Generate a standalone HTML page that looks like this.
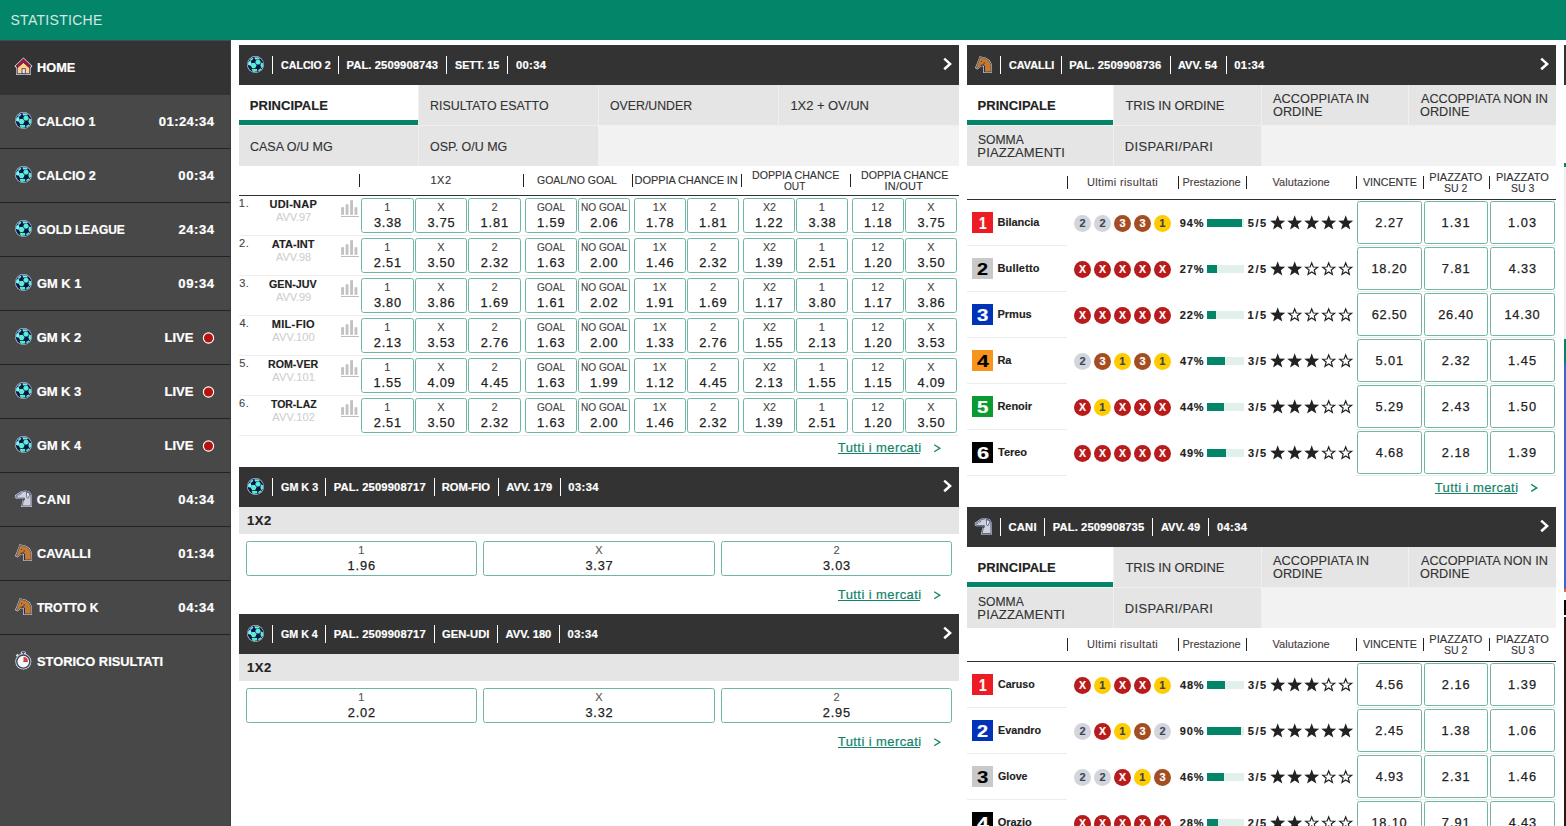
<!DOCTYPE html>
<html lang="it"><head><meta charset="utf-8"><title>Statistiche</title>
<style>html,body{margin:0;padding:0}body{width:1566px;height:826px;position:relative;overflow:hidden;background:#fff;font-family:"Liberation Sans",sans-serif}body>div,body>span,body>svg{position:absolute;display:block}body>span{white-space:nowrap;line-height:1;transform-origin:0 50%}</style></head>
<body>
<div style="left:0px;top:0px;width:1566px;height:40px;background:#028568;"></div>
<span style="left:10.47px;top:13px;font-size:14px;color:#fff;letter-spacing:0.29px;opacity:.82;">STATISTICHE</span>
<div style="left:0px;top:40px;width:231px;height:786px;background:#484848;"></div>
<div style="left:0px;top:41px;width:231px;height:54px;background:#333333;"></div>
<div style="left:0px;top:148px;width:231px;height:1px;background:#222222;"></div>
<div style="left:0px;top:202px;width:231px;height:1px;background:#222222;"></div>
<div style="left:0px;top:256px;width:231px;height:1px;background:#222222;"></div>
<div style="left:0px;top:310px;width:231px;height:1px;background:#222222;"></div>
<div style="left:0px;top:364px;width:231px;height:1px;background:#222222;"></div>
<div style="left:0px;top:418px;width:231px;height:1px;background:#222222;"></div>
<div style="left:0px;top:472px;width:231px;height:1px;background:#222222;"></div>
<div style="left:0px;top:526px;width:231px;height:1px;background:#222222;"></div>
<div style="left:0px;top:580px;width:231px;height:1px;background:#222222;"></div>
<div style="left:0px;top:634px;width:231px;height:1px;background:#222222;"></div>
<div style="left:230px;top:40px;width:1px;height:786px;background:#3e3e3e;"></div>
<svg style="left:13px;top:56px" width="22" height="22" viewBox="13 56 22 22"><g transform="translate(0 0)"><polygon points="23.45,57.5 32.4,66 31.7,67.3 30.8,67.4 30.7,74.9 16.2,74.9 16.1,67.4 15.2,67.3 14.5,66" fill="#dcdfee"/><polygon points="23.45,62.3 29.7,67.5 29.7,73.8 17.2,73.8 17.2,67.5" fill="#ffd37f" stroke="#17174f" stroke-width="0.8"/><path d="M16.7 67 L23.45 60.5 L30.2 67" fill="none" stroke="#17174f" stroke-width="2.9"/><path d="M16.9 66.8 L23.45 60.5 L30 66.8" fill="none" stroke="#c9112f" stroke-width="1.75"/><rect x="22" y="68.7" width="3.3" height="5" fill="#ebe5df" stroke="#2b2b63" stroke-width="0.75"/></g></svg>
<span style="left:36.77px;top:61px;font-size:13.1px;color:#fff;font-weight:700;transform:scaleX(0.974);-webkit-text-stroke:0.2px #fff;">HOME</span>
<svg style="left:13px;top:110px" width="21" height="21" viewBox="-10.5 -10.5 21 21"><circle r="8.5" fill="#b9bcd0"/><circle r="7.8" fill="#0b134e"/><polygon points="1.05,1.1 -0.42,3.65 -3.37,3.65 -4.85,1.1 -3.38,-1.45 -0.42,-1.45" fill="#5cefce"/><polygon points="5.3,-2.4 3.9,0.02 1.1,0.02 -0.3,-2.4 1.1,-4.82 3.9,-4.82" fill="#5cefce"/><polygon points="-1.2,-7.2 3.4,-7 4.3,-5.3 -0.4,-5.1" fill="#6df5e4"/><polygon points="-5.7,-4.6 -3,-6.9 -2.1,-5.7 -4.6,-3.6" fill="#6df5e4"/><polygon points="-7.3,-2.6 -5.1,-3.9 -3.9,-0.9 -5,1.2 -7.4,0.6" fill="#7cf9f1"/><polygon points="5.3,-2 7.4,-1.4 7.5,2.6 5.6,3.6 5,1" fill="#5cefce"/><polygon points="-3.9,4.5 1.5,4.5 1.9,7 -2.7,7.5" fill="#50ecc4"/><polygon points="2.5,5.6 5.2,3.8 6,4.9 3.2,7" fill="#50ecc4"/></svg>
<span style="left:36.8px;top:115px;font-size:13.1px;color:#fff;font-weight:700;transform:scaleX(0.959);-webkit-text-stroke:0.2px #fff;">CALCIO 1</span>
<span style="left:158.84px;top:115px;font-size:13.1px;color:#fff;font-weight:700;letter-spacing:0.39px;-webkit-text-stroke:0.2px #fff;">01:24:34</span>
<svg style="left:13px;top:164px" width="21" height="21" viewBox="-10.5 -10.5 21 21"><circle r="8.5" fill="#b9bcd0"/><circle r="7.8" fill="#0b134e"/><polygon points="1.05,1.1 -0.42,3.65 -3.37,3.65 -4.85,1.1 -3.38,-1.45 -0.42,-1.45" fill="#5cefce"/><polygon points="5.3,-2.4 3.9,0.02 1.1,0.02 -0.3,-2.4 1.1,-4.82 3.9,-4.82" fill="#5cefce"/><polygon points="-1.2,-7.2 3.4,-7 4.3,-5.3 -0.4,-5.1" fill="#6df5e4"/><polygon points="-5.7,-4.6 -3,-6.9 -2.1,-5.7 -4.6,-3.6" fill="#6df5e4"/><polygon points="-7.3,-2.6 -5.1,-3.9 -3.9,-0.9 -5,1.2 -7.4,0.6" fill="#7cf9f1"/><polygon points="5.3,-2 7.4,-1.4 7.5,2.6 5.6,3.6 5,1" fill="#5cefce"/><polygon points="-3.9,4.5 1.5,4.5 1.9,7 -2.7,7.5" fill="#50ecc4"/><polygon points="2.5,5.6 5.2,3.8 6,4.9 3.2,7" fill="#50ecc4"/></svg>
<span style="left:36.8px;top:169px;font-size:13.1px;color:#fff;font-weight:700;transform:scaleX(0.961);-webkit-text-stroke:0.2px #fff;">CALCIO 2</span>
<span style="left:178.34px;top:169px;font-size:13.1px;color:#fff;font-weight:700;letter-spacing:0.55px;-webkit-text-stroke:0.2px #fff;">00:34</span>
<svg style="left:13px;top:218px" width="21" height="21" viewBox="-10.5 -10.5 21 21"><circle r="8.5" fill="#b9bcd0"/><circle r="7.8" fill="#0b134e"/><polygon points="1.05,1.1 -0.42,3.65 -3.37,3.65 -4.85,1.1 -3.38,-1.45 -0.42,-1.45" fill="#5cefce"/><polygon points="5.3,-2.4 3.9,0.02 1.1,0.02 -0.3,-2.4 1.1,-4.82 3.9,-4.82" fill="#5cefce"/><polygon points="-1.2,-7.2 3.4,-7 4.3,-5.3 -0.4,-5.1" fill="#6df5e4"/><polygon points="-5.7,-4.6 -3,-6.9 -2.1,-5.7 -4.6,-3.6" fill="#6df5e4"/><polygon points="-7.3,-2.6 -5.1,-3.9 -3.9,-0.9 -5,1.2 -7.4,0.6" fill="#7cf9f1"/><polygon points="5.3,-2 7.4,-1.4 7.5,2.6 5.6,3.6 5,1" fill="#5cefce"/><polygon points="-3.9,4.5 1.5,4.5 1.9,7 -2.7,7.5" fill="#50ecc4"/><polygon points="2.5,5.6 5.2,3.8 6,4.9 3.2,7" fill="#50ecc4"/></svg>
<span style="left:36.82px;top:223px;font-size:13.1px;color:#fff;font-weight:700;transform:scaleX(0.915);-webkit-text-stroke:0.2px #fff;">GOLD LEAGUE</span>
<span style="left:178.41px;top:223px;font-size:13.1px;color:#fff;font-weight:700;letter-spacing:0.53px;-webkit-text-stroke:0.2px #fff;">24:34</span>
<svg style="left:13px;top:272px" width="21" height="21" viewBox="-10.5 -10.5 21 21"><circle r="8.5" fill="#b9bcd0"/><circle r="7.8" fill="#0b134e"/><polygon points="1.05,1.1 -0.42,3.65 -3.37,3.65 -4.85,1.1 -3.38,-1.45 -0.42,-1.45" fill="#5cefce"/><polygon points="5.3,-2.4 3.9,0.02 1.1,0.02 -0.3,-2.4 1.1,-4.82 3.9,-4.82" fill="#5cefce"/><polygon points="-1.2,-7.2 3.4,-7 4.3,-5.3 -0.4,-5.1" fill="#6df5e4"/><polygon points="-5.7,-4.6 -3,-6.9 -2.1,-5.7 -4.6,-3.6" fill="#6df5e4"/><polygon points="-7.3,-2.6 -5.1,-3.9 -3.9,-0.9 -5,1.2 -7.4,0.6" fill="#7cf9f1"/><polygon points="5.3,-2 7.4,-1.4 7.5,2.6 5.6,3.6 5,1" fill="#5cefce"/><polygon points="-3.9,4.5 1.5,4.5 1.9,7 -2.7,7.5" fill="#50ecc4"/><polygon points="2.5,5.6 5.2,3.8 6,4.9 3.2,7" fill="#50ecc4"/></svg>
<span style="left:36.79px;top:277px;font-size:13.1px;color:#fff;font-weight:700;transform:scaleX(0.982);-webkit-text-stroke:0.2px #fff;">GM K 1</span>
<span style="left:178.34px;top:277px;font-size:13.1px;color:#fff;font-weight:700;letter-spacing:0.55px;-webkit-text-stroke:0.2px #fff;">09:34</span>
<svg style="left:13px;top:326px" width="21" height="21" viewBox="-10.5 -10.5 21 21"><circle r="8.5" fill="#b9bcd0"/><circle r="7.8" fill="#0b134e"/><polygon points="1.05,1.1 -0.42,3.65 -3.37,3.65 -4.85,1.1 -3.38,-1.45 -0.42,-1.45" fill="#5cefce"/><polygon points="5.3,-2.4 3.9,0.02 1.1,0.02 -0.3,-2.4 1.1,-4.82 3.9,-4.82" fill="#5cefce"/><polygon points="-1.2,-7.2 3.4,-7 4.3,-5.3 -0.4,-5.1" fill="#6df5e4"/><polygon points="-5.7,-4.6 -3,-6.9 -2.1,-5.7 -4.6,-3.6" fill="#6df5e4"/><polygon points="-7.3,-2.6 -5.1,-3.9 -3.9,-0.9 -5,1.2 -7.4,0.6" fill="#7cf9f1"/><polygon points="5.3,-2 7.4,-1.4 7.5,2.6 5.6,3.6 5,1" fill="#5cefce"/><polygon points="-3.9,4.5 1.5,4.5 1.9,7 -2.7,7.5" fill="#50ecc4"/><polygon points="2.5,5.6 5.2,3.8 6,4.9 3.2,7" fill="#50ecc4"/></svg>
<span style="left:36.78px;top:331px;font-size:13.1px;color:#fff;font-weight:700;letter-spacing:-0.13px;-webkit-text-stroke:0.2px #fff;">GM K 2</span>
<span style="left:164.45px;top:331px;font-size:13.1px;color:#fff;font-weight:700;letter-spacing:0.01px;-webkit-text-stroke:0.2px #fff;">LIVE</span>
<svg style="left:202px;top:331px" width="14" height="14" viewBox="202 331 14 14"><circle cx="208.5" cy="338" r="5.7" fill="#fff"/><circle cx="208.5" cy="338" r="4.55" fill="#b5130f"/></svg>
<svg style="left:13px;top:380px" width="21" height="21" viewBox="-10.5 -10.5 21 21"><circle r="8.5" fill="#b9bcd0"/><circle r="7.8" fill="#0b134e"/><polygon points="1.05,1.1 -0.42,3.65 -3.37,3.65 -4.85,1.1 -3.38,-1.45 -0.42,-1.45" fill="#5cefce"/><polygon points="5.3,-2.4 3.9,0.02 1.1,0.02 -0.3,-2.4 1.1,-4.82 3.9,-4.82" fill="#5cefce"/><polygon points="-1.2,-7.2 3.4,-7 4.3,-5.3 -0.4,-5.1" fill="#6df5e4"/><polygon points="-5.7,-4.6 -3,-6.9 -2.1,-5.7 -4.6,-3.6" fill="#6df5e4"/><polygon points="-7.3,-2.6 -5.1,-3.9 -3.9,-0.9 -5,1.2 -7.4,0.6" fill="#7cf9f1"/><polygon points="5.3,-2 7.4,-1.4 7.5,2.6 5.6,3.6 5,1" fill="#5cefce"/><polygon points="-3.9,4.5 1.5,4.5 1.9,7 -2.7,7.5" fill="#50ecc4"/><polygon points="2.5,5.6 5.2,3.8 6,4.9 3.2,7" fill="#50ecc4"/></svg>
<span style="left:36.78px;top:385px;font-size:13.1px;color:#fff;font-weight:700;letter-spacing:-0.13px;-webkit-text-stroke:0.2px #fff;">GM K 3</span>
<span style="left:164.45px;top:385px;font-size:13.1px;color:#fff;font-weight:700;letter-spacing:0.01px;-webkit-text-stroke:0.2px #fff;">LIVE</span>
<svg style="left:202px;top:385px" width="14" height="14" viewBox="202 385 14 14"><circle cx="208.5" cy="392" r="5.7" fill="#fff"/><circle cx="208.5" cy="392" r="4.55" fill="#b5130f"/></svg>
<svg style="left:13px;top:434px" width="21" height="21" viewBox="-10.5 -10.5 21 21"><circle r="8.5" fill="#b9bcd0"/><circle r="7.8" fill="#0b134e"/><polygon points="1.05,1.1 -0.42,3.65 -3.37,3.65 -4.85,1.1 -3.38,-1.45 -0.42,-1.45" fill="#5cefce"/><polygon points="5.3,-2.4 3.9,0.02 1.1,0.02 -0.3,-2.4 1.1,-4.82 3.9,-4.82" fill="#5cefce"/><polygon points="-1.2,-7.2 3.4,-7 4.3,-5.3 -0.4,-5.1" fill="#6df5e4"/><polygon points="-5.7,-4.6 -3,-6.9 -2.1,-5.7 -4.6,-3.6" fill="#6df5e4"/><polygon points="-7.3,-2.6 -5.1,-3.9 -3.9,-0.9 -5,1.2 -7.4,0.6" fill="#7cf9f1"/><polygon points="5.3,-2 7.4,-1.4 7.5,2.6 5.6,3.6 5,1" fill="#5cefce"/><polygon points="-3.9,4.5 1.5,4.5 1.9,7 -2.7,7.5" fill="#50ecc4"/><polygon points="2.5,5.6 5.2,3.8 6,4.9 3.2,7" fill="#50ecc4"/></svg>
<span style="left:36.79px;top:439px;font-size:13.1px;color:#fff;font-weight:700;transform:scaleX(0.975);-webkit-text-stroke:0.2px #fff;">GM K 4</span>
<span style="left:164.45px;top:439px;font-size:13.1px;color:#fff;font-weight:700;letter-spacing:0.01px;-webkit-text-stroke:0.2px #fff;">LIVE</span>
<svg style="left:202px;top:439px" width="14" height="14" viewBox="202 439 14 14"><circle cx="208.5" cy="446" r="5.7" fill="#fff"/><circle cx="208.5" cy="446" r="4.55" fill="#b5130f"/></svg>
<svg style="left:13px;top:488px" width="22" height="22" viewBox="3 4 22 22"><path d="M5 11.3 L10.9 7.3 L15.6 6.4 L19.8 7.7 L21.7 10.9 L22 22.9 L11 22.9 L12.4 17.1 L13.3 14.8 L6.3 14.8 L4.8 13.4 Z" fill="#e3e5ee"/><path d="M5.9 11.7 L11.2 8.1 L15.6 7.2 L19.3 8.4 L20.9 11.1 L21.2 22 L12.1 22 L13.2 17.3 L14.3 14.1 L6.6 14.1 L5.8 13.2 Z" fill="#d2d2d5" stroke="#1c2b6c" stroke-width="0.65" stroke-linejoin="round"/><path d="M16.4 8.3 L19.2 8.9 L19.4 11.6 L17.8 14.4 L16.8 13.2 Z" fill="#f4f4f6" stroke="#1c2b6c" stroke-width="0.65" stroke-linejoin="round"/><path d="M14.2 14.2 L13.9 16.6" stroke="#1c2b6c" stroke-width="0.9"/><path d="M6.4 12.8 L8.4 11.6 M9 11.2 L11.6 9.4" stroke="#1c2b6c" stroke-width="0.55"/></svg>
<span style="left:36.78px;top:493px;font-size:13.1px;color:#fff;font-weight:700;letter-spacing:0.45px;-webkit-text-stroke:0.2px #fff;">CANI</span>
<span style="left:178.34px;top:493px;font-size:13.1px;color:#fff;font-weight:700;letter-spacing:0.55px;-webkit-text-stroke:0.2px #fff;">04:34</span>
<svg style="left:13px;top:542px" width="22" height="22" viewBox="3 4 22 22"><path d="M9.5 6.2 L11.6 6.8 L15.4 7.5 L19.7 10.3 L21.9 14.4 L22.1 22.7 L13.1 22.7 L13.2 16.4 L11.3 16.3 L7.4 19.6 L5 17.9 L7.5 12 L8.9 8.2 Z" fill="#dfe1ee"/><path d="M9.9 7.2 L11.6 7.6 L15.1 8.3 L19.1 10.9 L21.1 14.6 L21.3 21.9 L14.1 21.9 L14.2 15.5 L11 15.5 L7.4 18.5 L6.1 17.6 L8.3 12.2 L9.4 8.9 Z" fill="#c27a2b" stroke="#1b1f5e" stroke-width="0.55" stroke-linejoin="round"/><path d="M14.5 15.8 L14.5 21.6" stroke="#1b1f5e" stroke-width="0.9"/><path d="M10.6 15.2 L13.2 14.9 L14.2 13.2 L14.3 12.2" fill="none" stroke="#1b1f5e" stroke-width="0.7"/><circle cx="11.6" cy="11.6" r="0.5" fill="#1b1f5e"/></svg>
<span style="left:36.79px;top:547px;font-size:13.1px;color:#fff;font-weight:700;transform:scaleX(0.980);-webkit-text-stroke:0.2px #fff;">CAVALLI</span>
<span style="left:178.34px;top:547px;font-size:13.1px;color:#fff;font-weight:700;letter-spacing:0.55px;-webkit-text-stroke:0.2px #fff;">01:34</span>
<svg style="left:13px;top:596px" width="22" height="22" viewBox="3 4 22 22"><path d="M9.5 6.2 L11.6 6.8 L15.4 7.5 L19.7 10.3 L21.9 14.4 L22.1 22.7 L13.1 22.7 L13.2 16.4 L11.3 16.3 L7.4 19.6 L5 17.9 L7.5 12 L8.9 8.2 Z" fill="#dfe1ee"/><path d="M9.9 7.2 L11.6 7.6 L15.1 8.3 L19.1 10.9 L21.1 14.6 L21.3 21.9 L14.1 21.9 L14.2 15.5 L11 15.5 L7.4 18.5 L6.1 17.6 L8.3 12.2 L9.4 8.9 Z" fill="#c27a2b" stroke="#1b1f5e" stroke-width="0.55" stroke-linejoin="round"/><path d="M14.5 15.8 L14.5 21.6" stroke="#1b1f5e" stroke-width="0.9"/><path d="M10.6 15.2 L13.2 14.9 L14.2 13.2 L14.3 12.2" fill="none" stroke="#1b1f5e" stroke-width="0.7"/><circle cx="11.6" cy="11.6" r="0.5" fill="#1b1f5e"/></svg>
<span style="left:37.18px;top:601px;font-size:13.1px;color:#fff;font-weight:700;transform:scaleX(0.922);-webkit-text-stroke:0.2px #fff;">TROTTO K</span>
<span style="left:178.34px;top:601px;font-size:13.1px;color:#fff;font-weight:700;letter-spacing:0.55px;-webkit-text-stroke:0.2px #fff;">04:34</span>
<svg style="left:13px;top:649px" width="21" height="23" viewBox="-10.3 -12.6 21 23"><rect x="-2.5" y="-10" width="5" height="3.2" rx="1.2" fill="#e3e5ee"/><path d="M-5.3 -7.4 L-6.9 -5.4" stroke="#e3e5ee" stroke-width="1.8"/><circle r="8" fill="#dfe1ea"/><circle r="6.55" fill="#f5f8f5" stroke="#3b4361" stroke-width="1.4"/><path d="M0 -8.8 L0 -7 M-1.5 -9 L1.5 -9" stroke="#3b4361" stroke-width="1"/><path d="M0.2 -0.2 L0.2 -4.7 A4.6 4.6 0 0 1 4.7 -0.2 Z" fill="#f03636"/><path d="M0 0 L4.4 0" stroke="#2a2a5a" stroke-width="0.6"/></svg>
<span style="left:36.98px;top:655px;font-size:13.1px;color:#fff;font-weight:700;transform:scaleX(0.981);-webkit-text-stroke:0.2px #fff;">STORICO RISULTATI</span>
<div style="left:239px;top:45px;width:720px;height:40px;background:#333333;"></div>
<svg style="left:245px;top:54px" width="21" height="21" viewBox="-10.5 -10.5 21 21"><circle r="8.5" fill="#b9bcd0"/><circle r="7.8" fill="#0b134e"/><polygon points="1.05,1.1 -0.42,3.65 -3.37,3.65 -4.85,1.1 -3.38,-1.45 -0.42,-1.45" fill="#5cefce"/><polygon points="5.3,-2.4 3.9,0.02 1.1,0.02 -0.3,-2.4 1.1,-4.82 3.9,-4.82" fill="#5cefce"/><polygon points="-1.2,-7.2 3.4,-7 4.3,-5.3 -0.4,-5.1" fill="#6df5e4"/><polygon points="-5.7,-4.6 -3,-6.9 -2.1,-5.7 -4.6,-3.6" fill="#6df5e4"/><polygon points="-7.3,-2.6 -5.1,-3.9 -3.9,-0.9 -5,1.2 -7.4,0.6" fill="#7cf9f1"/><polygon points="5.3,-2 7.4,-1.4 7.5,2.6 5.6,3.6 5,1" fill="#5cefce"/><polygon points="-3.9,4.5 1.5,4.5 1.9,7 -2.7,7.5" fill="#50ecc4"/><polygon points="2.5,5.6 5.2,3.8 6,4.9 3.2,7" fill="#50ecc4"/></svg>
<span style="left:280.57px;top:60px;font-size:11.2px;color:#fff;font-weight:700;transform:scaleX(0.953);-webkit-text-stroke:0.2px #fff;">CALCIO 2</span>
<span style="left:346.47px;top:60px;font-size:11.2px;color:#fff;font-weight:700;letter-spacing:0.11px;-webkit-text-stroke:0.2px #fff;">PAL. 2509908743</span>
<span style="left:455.03px;top:60px;font-size:11.2px;color:#fff;font-weight:700;transform:scaleX(0.961);-webkit-text-stroke:0.2px #fff;">SETT. 15</span>
<span style="left:515.91px;top:60px;font-size:11.2px;color:#fff;font-weight:700;letter-spacing:0.37px;-webkit-text-stroke:0.2px #fff;">00:34</span>
<div style="left:272px;top:56px;width:1px;height:18px;background:#fff;"></div>
<div style="left:338px;top:56px;width:1px;height:18px;background:#fff;"></div>
<div style="left:446px;top:56px;width:1px;height:18px;background:#fff;"></div>
<div style="left:507px;top:56px;width:1px;height:18px;background:#fff;"></div>
<svg style="left:941px;top:55px" width="13" height="17" viewBox="-6.3 -8.9 13 17"><path d="M-3.1 -5.3 L2.8 0 L-3.1 5.3" fill="none" stroke="#fff" stroke-width="2.5"/></svg>
<div style="left:239px;top:85px;width:179px;height:40px;background:#fff;"></div>
<div style="left:239px;top:120px;width:179px;height:5px;background:#028568;"></div>
<div style="left:418px;top:85px;width:1px;height:40px;background:#f3efef;"></div>
<div style="left:419px;top:85px;width:179px;height:40px;background:#e5e5e5;"></div>
<div style="left:598px;top:85px;width:1px;height:40px;background:#f3efef;"></div>
<div style="left:599px;top:85px;width:179px;height:40px;background:#e5e5e5;"></div>
<div style="left:778px;top:85px;width:1px;height:40px;background:#f3efef;"></div>
<div style="left:779px;top:85px;width:179px;height:40px;background:#e5e5e5;"></div>
<div style="left:958px;top:85px;width:1px;height:40px;background:#e5e5e5;"></div>
<div style="left:239px;top:125px;width:720px;height:1px;background:#f3efef;"></div>
<div style="left:239px;top:126px;width:720px;height:40px;background:#f2f2f2;"></div>
<div style="left:239px;top:126px;width:179px;height:40px;background:#e5e5e5;"></div>
<div style="left:418px;top:126px;width:1px;height:40px;background:#f3efef;"></div>
<div style="left:419px;top:126px;width:179px;height:40px;background:#e5e5e5;"></div>
<div style="left:598px;top:126px;width:1px;height:40px;background:#f3efef;"></div>
<span style="left:249.75px;top:99px;font-size:13px;color:#222;font-weight:700;letter-spacing:0.04px;-webkit-text-stroke:0.15px #222;">PRINCIPALE</span>
<span style="left:429.61px;top:99px;font-size:13px;color:#333;transform:scaleX(0.954);-webkit-text-stroke:0.12px #333;">RISULTATO ESATTO</span>
<span style="left:610.45px;top:99px;font-size:13px;color:#333;transform:scaleX(0.947);-webkit-text-stroke:0.12px #333;">OVER/UNDER</span>
<span style="left:790.42px;top:99px;font-size:13px;color:#333;letter-spacing:-0.06px;-webkit-text-stroke:0.12px #333;">1X2 + OV/UN</span>
<span style="left:249.97px;top:140px;font-size:13px;color:#333;transform:scaleX(0.962);-webkit-text-stroke:0.12px #333;">CASA O/U MG</span>
<span style="left:430.04px;top:140px;font-size:13px;color:#333;transform:scaleX(0.958);-webkit-text-stroke:0.12px #333;">OSP. O/U MG</span>
<div style="left:359px;top:174px;width:1px;height:13px;background:#222;"></div>
<div style="left:523px;top:174px;width:1px;height:13px;background:#222;"></div>
<div style="left:632px;top:174px;width:1px;height:13px;background:#222;"></div>
<div style="left:741px;top:174px;width:1px;height:13px;background:#222;"></div>
<div style="left:850px;top:174px;width:1px;height:13px;background:#222;"></div>
<span style="left:430.43px;top:175px;font-size:11px;color:#333;letter-spacing:0.52px;-webkit-text-stroke:0.12px #333;">1X2</span>
<span style="left:537.18px;top:175px;font-size:11px;color:#333;transform:scaleX(0.954);-webkit-text-stroke:0.12px #333;">GOAL/NO GOAL</span>
<span style="left:634.62px;top:175px;font-size:11px;color:#333;letter-spacing:-0.09px;-webkit-text-stroke:0.12px #333;">DOPPIA CHANCE IN</span>
<span style="left:751.65px;top:170px;font-size:11px;color:#333;transform:scaleX(0.965);-webkit-text-stroke:0.12px #333;">DOPPIA CHANCE</span>
<span style="left:784.19px;top:181px;font-size:11px;color:#333;transform:scaleX(0.920);-webkit-text-stroke:0.12px #333;">OUT</span>
<span style="left:860.55px;top:170px;font-size:11px;color:#333;transform:scaleX(0.965);-webkit-text-stroke:0.12px #333;">DOPPIA CHANCE</span>
<span style="left:884.56px;top:181px;font-size:11px;color:#333;letter-spacing:0.24px;-webkit-text-stroke:0.12px #333;">IN/OUT</span>
<div style="left:239px;top:195px;width:720px;height:1px;background:#303030;"></div>
<span style="left:238.78px;top:198px;font-size:11px;color:#444;letter-spacing:0.93px;-webkit-text-stroke:0.12px #444;">1.</span>
<span style="left:269.49px;top:199px;font-size:11px;color:#222;font-weight:700;letter-spacing:0.25px;-webkit-text-stroke:0.15px #222;">UDI-NAP</span>
<span style="left:276.05px;top:212px;font-size:11px;color:#cfcfcf;letter-spacing:-0.1px;-webkit-text-stroke:0.12px #cfcfcf;">AVV.97</span>
<svg style="left:341px;top:199px" width="20" height="20" viewBox="0 -0.2 20 20"><rect x="0.1" y="8" width="2.9" height="7.6" fill="#c2c2c2"/><rect x="4.6" y="5.1" width="2.9" height="10.5" fill="#c2c2c2"/><rect x="9.1" y="1" width="2.9" height="14.6" fill="#c2c2c2"/><rect x="13.5" y="8" width="2.9" height="7.6" fill="#c2c2c2"/><rect x="0" y="16.8" width="18" height="1" fill="#bdbdbd"/></svg>
<div style="left:361px;top:198px;width:51px;height:33px;border:1px solid #6fb6a4;border-radius:2.6px;background:#fff"></div>
<span style="left:384.28px;top:202px;font-size:11px;color:#444;-webkit-text-stroke:0.12px #444;">1</span>
<span style="left:373.9px;top:217px;font-size:12.8px;color:#222;letter-spacing:0.79px;-webkit-text-stroke:0.25px #222;">3.38</span>
<div style="left:415px;top:198px;width:50px;height:33px;border:1px solid #6fb6a4;border-radius:2.6px;background:#fff"></div>
<span style="left:437.31px;top:202px;font-size:11px;color:#444;-webkit-text-stroke:0.12px #444;">X</span>
<span style="left:427.4px;top:217px;font-size:12.8px;color:#222;letter-spacing:0.79px;-webkit-text-stroke:0.25px #222;">3.75</span>
<div style="left:468px;top:198px;width:51px;height:33px;border:1px solid #6fb6a4;border-radius:2.6px;background:#fff"></div>
<span style="left:491.42px;top:202px;font-size:11px;color:#444;-webkit-text-stroke:0.12px #444;">2</span>
<span style="left:480.39px;top:217px;font-size:12.8px;color:#222;letter-spacing:0.98px;-webkit-text-stroke:0.25px #222;">1.81</span>
<div style="left:525px;top:198px;width:50px;height:33px;border:1px solid #6fb6a4;border-radius:2.6px;background:#fff"></div>
<span style="left:536.9px;top:202px;font-size:11px;color:#444;transform:scaleX(0.916);-webkit-text-stroke:0.12px #444;">GOAL</span>
<span style="left:536.89px;top:217px;font-size:12.8px;color:#222;letter-spacing:0.98px;-webkit-text-stroke:0.25px #222;">1.59</span>
<div style="left:578px;top:198px;width:50px;height:33px;border:1px solid #6fb6a4;border-radius:2.6px;background:#fff"></div>
<span style="left:580.69px;top:202px;font-size:11px;color:#444;transform:scaleX(0.920);-webkit-text-stroke:0.12px #444;">NO GOAL</span>
<span style="left:590.21px;top:217px;font-size:12.8px;color:#222;letter-spacing:0.85px;-webkit-text-stroke:0.25px #222;">2.06</span>
<div style="left:634px;top:198px;width:50px;height:33px;border:1px solid #6fb6a4;border-radius:2.6px;background:#fff"></div>
<span style="left:652.77px;top:202px;font-size:11px;color:#444;letter-spacing:0.37px;-webkit-text-stroke:0.12px #444;">1X</span>
<span style="left:645.89px;top:217px;font-size:12.8px;color:#222;letter-spacing:0.96px;-webkit-text-stroke:0.25px #222;">1.78</span>
<div style="left:687px;top:198px;width:50px;height:33px;border:1px solid #6fb6a4;border-radius:2.6px;background:#fff"></div>
<span style="left:709.92px;top:202px;font-size:11px;color:#444;-webkit-text-stroke:0.12px #444;">2</span>
<span style="left:698.89px;top:217px;font-size:12.8px;color:#222;letter-spacing:0.98px;-webkit-text-stroke:0.25px #222;">1.81</span>
<div style="left:743px;top:198px;width:50px;height:33px;border:1px solid #6fb6a4;border-radius:2.6px;background:#fff"></div>
<span style="left:762.64px;top:202px;font-size:11px;color:#444;transform:scaleX(0.968);-webkit-text-stroke:0.12px #444;">X2</span>
<span style="left:754.89px;top:217px;font-size:12.8px;color:#222;letter-spacing:0.98px;-webkit-text-stroke:0.25px #222;">1.22</span>
<div style="left:796px;top:198px;width:50px;height:33px;border:1px solid #6fb6a4;border-radius:2.6px;background:#fff"></div>
<span style="left:818.78px;top:202px;font-size:11px;color:#444;-webkit-text-stroke:0.12px #444;">1</span>
<span style="left:808.4px;top:217px;font-size:12.8px;color:#222;letter-spacing:0.79px;-webkit-text-stroke:0.25px #222;">3.38</span>
<div style="left:852px;top:198px;width:50px;height:33px;border:1px solid #6fb6a4;border-radius:2.6px;background:#fff"></div>
<span style="left:871.27px;top:202px;font-size:11px;color:#444;letter-spacing:0.91px;-webkit-text-stroke:0.12px #444;">12</span>
<span style="left:863.89px;top:217px;font-size:12.8px;color:#222;letter-spacing:0.96px;-webkit-text-stroke:0.25px #222;">1.18</span>
<div style="left:905px;top:198px;width:50px;height:33px;border:1px solid #6fb6a4;border-radius:2.6px;background:#fff"></div>
<span style="left:927.31px;top:202px;font-size:11px;color:#444;-webkit-text-stroke:0.12px #444;">X</span>
<span style="left:917.4px;top:217px;font-size:12.8px;color:#222;letter-spacing:0.79px;-webkit-text-stroke:0.25px #222;">3.75</span>
<div style="left:239px;top:235px;width:720px;height:1px;background:#eeeeee;"></div>
<span style="left:239.05px;top:238px;font-size:11px;color:#444;letter-spacing:0.66px;-webkit-text-stroke:0.12px #444;">2.</span>
<span style="left:271.83px;top:239px;font-size:11px;color:#222;font-weight:700;letter-spacing:0.06px;-webkit-text-stroke:0.15px #222;">ATA-INT</span>
<span style="left:276.05px;top:252px;font-size:11px;color:#cfcfcf;transform:scaleX(0.985);-webkit-text-stroke:0.12px #cfcfcf;">AVV.98</span>
<svg style="left:341px;top:239px" width="20" height="20" viewBox="0 -0.2 20 20"><rect x="0.1" y="8" width="2.9" height="7.6" fill="#c2c2c2"/><rect x="4.6" y="5.1" width="2.9" height="10.5" fill="#c2c2c2"/><rect x="9.1" y="1" width="2.9" height="14.6" fill="#c2c2c2"/><rect x="13.5" y="8" width="2.9" height="7.6" fill="#c2c2c2"/><rect x="0" y="16.8" width="18" height="1" fill="#bdbdbd"/></svg>
<div style="left:361px;top:238px;width:51px;height:33px;border:1px solid #6fb6a4;border-radius:2.6px;background:#fff"></div>
<span style="left:384.28px;top:242px;font-size:11px;color:#444;-webkit-text-stroke:0.12px #444;">1</span>
<span style="left:373.71px;top:257px;font-size:12.8px;color:#222;letter-spacing:0.87px;-webkit-text-stroke:0.25px #222;">2.51</span>
<div style="left:415px;top:238px;width:50px;height:33px;border:1px solid #6fb6a4;border-radius:2.6px;background:#fff"></div>
<span style="left:437.31px;top:242px;font-size:11px;color:#444;-webkit-text-stroke:0.12px #444;">X</span>
<span style="left:427.4px;top:257px;font-size:12.8px;color:#222;letter-spacing:0.77px;-webkit-text-stroke:0.25px #222;">3.50</span>
<div style="left:468px;top:238px;width:51px;height:33px;border:1px solid #6fb6a4;border-radius:2.6px;background:#fff"></div>
<span style="left:491.42px;top:242px;font-size:11px;color:#444;-webkit-text-stroke:0.12px #444;">2</span>
<span style="left:480.71px;top:257px;font-size:12.8px;color:#222;letter-spacing:0.87px;-webkit-text-stroke:0.25px #222;">2.32</span>
<div style="left:525px;top:238px;width:50px;height:33px;border:1px solid #6fb6a4;border-radius:2.6px;background:#fff"></div>
<span style="left:536.9px;top:242px;font-size:11px;color:#444;transform:scaleX(0.916);-webkit-text-stroke:0.12px #444;">GOAL</span>
<span style="left:536.89px;top:257px;font-size:12.8px;color:#222;letter-spacing:0.96px;-webkit-text-stroke:0.25px #222;">1.63</span>
<div style="left:578px;top:238px;width:50px;height:33px;border:1px solid #6fb6a4;border-radius:2.6px;background:#fff"></div>
<span style="left:580.69px;top:242px;font-size:11px;color:#444;transform:scaleX(0.920);-webkit-text-stroke:0.12px #444;">NO GOAL</span>
<span style="left:590.21px;top:257px;font-size:12.8px;color:#222;letter-spacing:0.83px;-webkit-text-stroke:0.25px #222;">2.00</span>
<div style="left:634px;top:238px;width:50px;height:33px;border:1px solid #6fb6a4;border-radius:2.6px;background:#fff"></div>
<span style="left:652.77px;top:242px;font-size:11px;color:#444;letter-spacing:0.37px;-webkit-text-stroke:0.12px #444;">1X</span>
<span style="left:645.89px;top:257px;font-size:12.8px;color:#222;letter-spacing:0.96px;-webkit-text-stroke:0.25px #222;">1.46</span>
<div style="left:687px;top:238px;width:50px;height:33px;border:1px solid #6fb6a4;border-radius:2.6px;background:#fff"></div>
<span style="left:709.92px;top:242px;font-size:11px;color:#444;-webkit-text-stroke:0.12px #444;">2</span>
<span style="left:699.21px;top:257px;font-size:12.8px;color:#222;letter-spacing:0.87px;-webkit-text-stroke:0.25px #222;">2.32</span>
<div style="left:743px;top:238px;width:50px;height:33px;border:1px solid #6fb6a4;border-radius:2.6px;background:#fff"></div>
<span style="left:762.64px;top:242px;font-size:11px;color:#444;transform:scaleX(0.968);-webkit-text-stroke:0.12px #444;">X2</span>
<span style="left:754.89px;top:257px;font-size:12.8px;color:#222;letter-spacing:0.98px;-webkit-text-stroke:0.25px #222;">1.39</span>
<div style="left:796px;top:238px;width:50px;height:33px;border:1px solid #6fb6a4;border-radius:2.6px;background:#fff"></div>
<span style="left:818.78px;top:242px;font-size:11px;color:#444;-webkit-text-stroke:0.12px #444;">1</span>
<span style="left:808.21px;top:257px;font-size:12.8px;color:#222;letter-spacing:0.87px;-webkit-text-stroke:0.25px #222;">2.51</span>
<div style="left:852px;top:238px;width:50px;height:33px;border:1px solid #6fb6a4;border-radius:2.6px;background:#fff"></div>
<span style="left:871.27px;top:242px;font-size:11px;color:#444;letter-spacing:0.91px;-webkit-text-stroke:0.12px #444;">12</span>
<span style="left:863.89px;top:257px;font-size:12.8px;color:#222;letter-spacing:0.94px;-webkit-text-stroke:0.25px #222;">1.20</span>
<div style="left:905px;top:238px;width:50px;height:33px;border:1px solid #6fb6a4;border-radius:2.6px;background:#fff"></div>
<span style="left:927.31px;top:242px;font-size:11px;color:#444;-webkit-text-stroke:0.12px #444;">X</span>
<span style="left:917.4px;top:257px;font-size:12.8px;color:#222;letter-spacing:0.77px;-webkit-text-stroke:0.25px #222;">3.50</span>
<div style="left:239px;top:275px;width:720px;height:1px;background:#eeeeee;"></div>
<span style="left:239.22px;top:278px;font-size:11px;color:#444;letter-spacing:0.49px;-webkit-text-stroke:0.12px #444;">3.</span>
<span style="left:269.27px;top:279px;font-size:11px;color:#222;font-weight:700;transform:scaleX(0.975);-webkit-text-stroke:0.15px #222;">GEN-JUV</span>
<span style="left:276.05px;top:292px;font-size:11px;color:#cfcfcf;letter-spacing:-0.1px;-webkit-text-stroke:0.12px #cfcfcf;">AVV.99</span>
<svg style="left:341px;top:279px" width="20" height="20" viewBox="0 -0.2 20 20"><rect x="0.1" y="8" width="2.9" height="7.6" fill="#c2c2c2"/><rect x="4.6" y="5.1" width="2.9" height="10.5" fill="#c2c2c2"/><rect x="9.1" y="1" width="2.9" height="14.6" fill="#c2c2c2"/><rect x="13.5" y="8" width="2.9" height="7.6" fill="#c2c2c2"/><rect x="0" y="16.8" width="18" height="1" fill="#bdbdbd"/></svg>
<div style="left:361px;top:278px;width:51px;height:33px;border:1px solid #6fb6a4;border-radius:2.6px;background:#fff"></div>
<span style="left:384.28px;top:282px;font-size:11px;color:#444;-webkit-text-stroke:0.12px #444;">1</span>
<span style="left:373.9px;top:297px;font-size:12.8px;color:#222;letter-spacing:0.77px;-webkit-text-stroke:0.25px #222;">3.80</span>
<div style="left:415px;top:278px;width:50px;height:33px;border:1px solid #6fb6a4;border-radius:2.6px;background:#fff"></div>
<span style="left:437.31px;top:282px;font-size:11px;color:#444;-webkit-text-stroke:0.12px #444;">X</span>
<span style="left:427.4px;top:297px;font-size:12.8px;color:#222;letter-spacing:0.79px;-webkit-text-stroke:0.25px #222;">3.86</span>
<div style="left:468px;top:278px;width:51px;height:33px;border:1px solid #6fb6a4;border-radius:2.6px;background:#fff"></div>
<span style="left:491.42px;top:282px;font-size:11px;color:#444;-webkit-text-stroke:0.12px #444;">2</span>
<span style="left:480.39px;top:297px;font-size:12.8px;color:#222;letter-spacing:0.98px;-webkit-text-stroke:0.25px #222;">1.69</span>
<div style="left:525px;top:278px;width:50px;height:33px;border:1px solid #6fb6a4;border-radius:2.6px;background:#fff"></div>
<span style="left:536.9px;top:282px;font-size:11px;color:#444;transform:scaleX(0.916);-webkit-text-stroke:0.12px #444;">GOAL</span>
<span style="left:536.89px;top:297px;font-size:12.8px;color:#222;letter-spacing:0.98px;-webkit-text-stroke:0.25px #222;">1.61</span>
<div style="left:578px;top:278px;width:50px;height:33px;border:1px solid #6fb6a4;border-radius:2.6px;background:#fff"></div>
<span style="left:580.69px;top:282px;font-size:11px;color:#444;transform:scaleX(0.920);-webkit-text-stroke:0.12px #444;">NO GOAL</span>
<span style="left:590.21px;top:297px;font-size:12.8px;color:#222;letter-spacing:0.87px;-webkit-text-stroke:0.25px #222;">2.02</span>
<div style="left:634px;top:278px;width:50px;height:33px;border:1px solid #6fb6a4;border-radius:2.6px;background:#fff"></div>
<span style="left:652.77px;top:282px;font-size:11px;color:#444;letter-spacing:0.37px;-webkit-text-stroke:0.12px #444;">1X</span>
<span style="left:645.89px;top:297px;font-size:12.8px;color:#222;letter-spacing:0.98px;-webkit-text-stroke:0.25px #222;">1.91</span>
<div style="left:687px;top:278px;width:50px;height:33px;border:1px solid #6fb6a4;border-radius:2.6px;background:#fff"></div>
<span style="left:709.92px;top:282px;font-size:11px;color:#444;-webkit-text-stroke:0.12px #444;">2</span>
<span style="left:698.89px;top:297px;font-size:12.8px;color:#222;letter-spacing:0.98px;-webkit-text-stroke:0.25px #222;">1.69</span>
<div style="left:743px;top:278px;width:50px;height:33px;border:1px solid #6fb6a4;border-radius:2.6px;background:#fff"></div>
<span style="left:762.64px;top:282px;font-size:11px;color:#444;transform:scaleX(0.968);-webkit-text-stroke:0.12px #444;">X2</span>
<span style="left:754.89px;top:297px;font-size:12.8px;color:#222;letter-spacing:0.98px;-webkit-text-stroke:0.25px #222;">1.17</span>
<div style="left:796px;top:278px;width:50px;height:33px;border:1px solid #6fb6a4;border-radius:2.6px;background:#fff"></div>
<span style="left:818.78px;top:282px;font-size:11px;color:#444;-webkit-text-stroke:0.12px #444;">1</span>
<span style="left:808.4px;top:297px;font-size:12.8px;color:#222;letter-spacing:0.77px;-webkit-text-stroke:0.25px #222;">3.80</span>
<div style="left:852px;top:278px;width:50px;height:33px;border:1px solid #6fb6a4;border-radius:2.6px;background:#fff"></div>
<span style="left:871.27px;top:282px;font-size:11px;color:#444;letter-spacing:0.91px;-webkit-text-stroke:0.12px #444;">12</span>
<span style="left:863.89px;top:297px;font-size:12.8px;color:#222;letter-spacing:0.98px;-webkit-text-stroke:0.25px #222;">1.17</span>
<div style="left:905px;top:278px;width:50px;height:33px;border:1px solid #6fb6a4;border-radius:2.6px;background:#fff"></div>
<span style="left:927.31px;top:282px;font-size:11px;color:#444;-webkit-text-stroke:0.12px #444;">X</span>
<span style="left:917.4px;top:297px;font-size:12.8px;color:#222;letter-spacing:0.79px;-webkit-text-stroke:0.25px #222;">3.86</span>
<div style="left:239px;top:315px;width:720px;height:1px;background:#eeeeee;"></div>
<span style="left:239.38px;top:318px;font-size:11px;color:#444;letter-spacing:0.33px;-webkit-text-stroke:0.12px #444;">4.</span>
<span style="left:271.64px;top:319px;font-size:11px;color:#222;font-weight:700;letter-spacing:0.35px;-webkit-text-stroke:0.15px #222;">MIL-FIO</span>
<span style="left:272.35px;top:332px;font-size:11px;color:#cfcfcf;letter-spacing:0.12px;-webkit-text-stroke:0.12px #cfcfcf;">AVV.100</span>
<svg style="left:341px;top:319px" width="20" height="20" viewBox="0 -0.2 20 20"><rect x="0.1" y="8" width="2.9" height="7.6" fill="#c2c2c2"/><rect x="4.6" y="5.1" width="2.9" height="10.5" fill="#c2c2c2"/><rect x="9.1" y="1" width="2.9" height="14.6" fill="#c2c2c2"/><rect x="13.5" y="8" width="2.9" height="7.6" fill="#c2c2c2"/><rect x="0" y="16.8" width="18" height="1" fill="#bdbdbd"/></svg>
<div style="left:361px;top:318px;width:51px;height:33px;border:1px solid #6fb6a4;border-radius:2.6px;background:#fff"></div>
<span style="left:384.28px;top:322px;font-size:11px;color:#444;-webkit-text-stroke:0.12px #444;">1</span>
<span style="left:373.71px;top:337px;font-size:12.8px;color:#222;letter-spacing:0.85px;-webkit-text-stroke:0.25px #222;">2.13</span>
<div style="left:415px;top:318px;width:50px;height:33px;border:1px solid #6fb6a4;border-radius:2.6px;background:#fff"></div>
<span style="left:437.31px;top:322px;font-size:11px;color:#444;-webkit-text-stroke:0.12px #444;">X</span>
<span style="left:427.4px;top:337px;font-size:12.8px;color:#222;letter-spacing:0.79px;-webkit-text-stroke:0.25px #222;">3.53</span>
<div style="left:468px;top:318px;width:51px;height:33px;border:1px solid #6fb6a4;border-radius:2.6px;background:#fff"></div>
<span style="left:491.42px;top:322px;font-size:11px;color:#444;-webkit-text-stroke:0.12px #444;">2</span>
<span style="left:480.71px;top:337px;font-size:12.8px;color:#222;letter-spacing:0.85px;-webkit-text-stroke:0.25px #222;">2.76</span>
<div style="left:525px;top:318px;width:50px;height:33px;border:1px solid #6fb6a4;border-radius:2.6px;background:#fff"></div>
<span style="left:536.9px;top:322px;font-size:11px;color:#444;transform:scaleX(0.916);-webkit-text-stroke:0.12px #444;">GOAL</span>
<span style="left:536.89px;top:337px;font-size:12.8px;color:#222;letter-spacing:0.96px;-webkit-text-stroke:0.25px #222;">1.63</span>
<div style="left:578px;top:318px;width:50px;height:33px;border:1px solid #6fb6a4;border-radius:2.6px;background:#fff"></div>
<span style="left:580.69px;top:322px;font-size:11px;color:#444;transform:scaleX(0.920);-webkit-text-stroke:0.12px #444;">NO GOAL</span>
<span style="left:590.21px;top:337px;font-size:12.8px;color:#222;letter-spacing:0.83px;-webkit-text-stroke:0.25px #222;">2.00</span>
<div style="left:634px;top:318px;width:50px;height:33px;border:1px solid #6fb6a4;border-radius:2.6px;background:#fff"></div>
<span style="left:652.77px;top:322px;font-size:11px;color:#444;letter-spacing:0.37px;-webkit-text-stroke:0.12px #444;">1X</span>
<span style="left:645.89px;top:337px;font-size:12.8px;color:#222;letter-spacing:0.96px;-webkit-text-stroke:0.25px #222;">1.33</span>
<div style="left:687px;top:318px;width:50px;height:33px;border:1px solid #6fb6a4;border-radius:2.6px;background:#fff"></div>
<span style="left:709.92px;top:322px;font-size:11px;color:#444;-webkit-text-stroke:0.12px #444;">2</span>
<span style="left:699.21px;top:337px;font-size:12.8px;color:#222;letter-spacing:0.85px;-webkit-text-stroke:0.25px #222;">2.76</span>
<div style="left:743px;top:318px;width:50px;height:33px;border:1px solid #6fb6a4;border-radius:2.6px;background:#fff"></div>
<span style="left:762.64px;top:322px;font-size:11px;color:#444;transform:scaleX(0.968);-webkit-text-stroke:0.12px #444;">X2</span>
<span style="left:754.89px;top:337px;font-size:12.8px;color:#222;letter-spacing:0.96px;-webkit-text-stroke:0.25px #222;">1.55</span>
<div style="left:796px;top:318px;width:50px;height:33px;border:1px solid #6fb6a4;border-radius:2.6px;background:#fff"></div>
<span style="left:818.78px;top:322px;font-size:11px;color:#444;-webkit-text-stroke:0.12px #444;">1</span>
<span style="left:808.21px;top:337px;font-size:12.8px;color:#222;letter-spacing:0.85px;-webkit-text-stroke:0.25px #222;">2.13</span>
<div style="left:852px;top:318px;width:50px;height:33px;border:1px solid #6fb6a4;border-radius:2.6px;background:#fff"></div>
<span style="left:871.27px;top:322px;font-size:11px;color:#444;letter-spacing:0.91px;-webkit-text-stroke:0.12px #444;">12</span>
<span style="left:863.89px;top:337px;font-size:12.8px;color:#222;letter-spacing:0.94px;-webkit-text-stroke:0.25px #222;">1.20</span>
<div style="left:905px;top:318px;width:50px;height:33px;border:1px solid #6fb6a4;border-radius:2.6px;background:#fff"></div>
<span style="left:927.31px;top:322px;font-size:11px;color:#444;-webkit-text-stroke:0.12px #444;">X</span>
<span style="left:917.4px;top:337px;font-size:12.8px;color:#222;letter-spacing:0.79px;-webkit-text-stroke:0.25px #222;">3.53</span>
<div style="left:239px;top:355px;width:720px;height:1px;background:#eeeeee;"></div>
<span style="left:239.16px;top:358px;font-size:11px;color:#444;letter-spacing:0.55px;-webkit-text-stroke:0.12px #444;">5.</span>
<span style="left:267.96px;top:359px;font-size:11px;color:#222;font-weight:700;transform:scaleX(0.966);-webkit-text-stroke:0.15px #222;">ROM-VER</span>
<span style="left:272.35px;top:372px;font-size:11px;color:#cfcfcf;letter-spacing:0.14px;-webkit-text-stroke:0.12px #cfcfcf;">AVV.101</span>
<svg style="left:341px;top:359px" width="20" height="20" viewBox="0 -0.2 20 20"><rect x="0.1" y="8" width="2.9" height="7.6" fill="#c2c2c2"/><rect x="4.6" y="5.1" width="2.9" height="10.5" fill="#c2c2c2"/><rect x="9.1" y="1" width="2.9" height="14.6" fill="#c2c2c2"/><rect x="13.5" y="8" width="2.9" height="7.6" fill="#c2c2c2"/><rect x="0" y="16.8" width="18" height="1" fill="#bdbdbd"/></svg>
<div style="left:361px;top:358px;width:51px;height:33px;border:1px solid #6fb6a4;border-radius:2.6px;background:#fff"></div>
<span style="left:384.28px;top:362px;font-size:11px;color:#444;-webkit-text-stroke:0.12px #444;">1</span>
<span style="left:373.39px;top:377px;font-size:12.8px;color:#222;letter-spacing:0.96px;-webkit-text-stroke:0.25px #222;">1.55</span>
<div style="left:415px;top:358px;width:50px;height:33px;border:1px solid #6fb6a4;border-radius:2.6px;background:#fff"></div>
<span style="left:437.31px;top:362px;font-size:11px;color:#444;-webkit-text-stroke:0.12px #444;">X</span>
<span style="left:427.59px;top:377px;font-size:12.8px;color:#222;letter-spacing:0.75px;-webkit-text-stroke:0.25px #222;">4.09</span>
<div style="left:468px;top:358px;width:51px;height:33px;border:1px solid #6fb6a4;border-radius:2.6px;background:#fff"></div>
<span style="left:491.42px;top:362px;font-size:11px;color:#444;-webkit-text-stroke:0.12px #444;">2</span>
<span style="left:481.09px;top:377px;font-size:12.8px;color:#222;letter-spacing:0.72px;-webkit-text-stroke:0.25px #222;">4.45</span>
<div style="left:525px;top:358px;width:50px;height:33px;border:1px solid #6fb6a4;border-radius:2.6px;background:#fff"></div>
<span style="left:536.9px;top:362px;font-size:11px;color:#444;transform:scaleX(0.916);-webkit-text-stroke:0.12px #444;">GOAL</span>
<span style="left:536.89px;top:377px;font-size:12.8px;color:#222;letter-spacing:0.96px;-webkit-text-stroke:0.25px #222;">1.63</span>
<div style="left:578px;top:358px;width:50px;height:33px;border:1px solid #6fb6a4;border-radius:2.6px;background:#fff"></div>
<span style="left:580.69px;top:362px;font-size:11px;color:#444;transform:scaleX(0.920);-webkit-text-stroke:0.12px #444;">NO GOAL</span>
<span style="left:589.89px;top:377px;font-size:12.8px;color:#222;letter-spacing:0.98px;-webkit-text-stroke:0.25px #222;">1.99</span>
<div style="left:634px;top:358px;width:50px;height:33px;border:1px solid #6fb6a4;border-radius:2.6px;background:#fff"></div>
<span style="left:652.77px;top:362px;font-size:11px;color:#444;letter-spacing:0.37px;-webkit-text-stroke:0.12px #444;">1X</span>
<span style="left:645.89px;top:377px;font-size:12.8px;color:#222;letter-spacing:0.98px;-webkit-text-stroke:0.25px #222;">1.12</span>
<div style="left:687px;top:358px;width:50px;height:33px;border:1px solid #6fb6a4;border-radius:2.6px;background:#fff"></div>
<span style="left:709.92px;top:362px;font-size:11px;color:#444;-webkit-text-stroke:0.12px #444;">2</span>
<span style="left:699.59px;top:377px;font-size:12.8px;color:#222;letter-spacing:0.72px;-webkit-text-stroke:0.25px #222;">4.45</span>
<div style="left:743px;top:358px;width:50px;height:33px;border:1px solid #6fb6a4;border-radius:2.6px;background:#fff"></div>
<span style="left:762.64px;top:362px;font-size:11px;color:#444;transform:scaleX(0.968);-webkit-text-stroke:0.12px #444;">X2</span>
<span style="left:755.21px;top:377px;font-size:12.8px;color:#222;letter-spacing:0.85px;-webkit-text-stroke:0.25px #222;">2.13</span>
<div style="left:796px;top:358px;width:50px;height:33px;border:1px solid #6fb6a4;border-radius:2.6px;background:#fff"></div>
<span style="left:818.78px;top:362px;font-size:11px;color:#444;-webkit-text-stroke:0.12px #444;">1</span>
<span style="left:807.89px;top:377px;font-size:12.8px;color:#222;letter-spacing:0.96px;-webkit-text-stroke:0.25px #222;">1.55</span>
<div style="left:852px;top:358px;width:50px;height:33px;border:1px solid #6fb6a4;border-radius:2.6px;background:#fff"></div>
<span style="left:871.27px;top:362px;font-size:11px;color:#444;letter-spacing:0.91px;-webkit-text-stroke:0.12px #444;">12</span>
<span style="left:863.89px;top:377px;font-size:12.8px;color:#222;letter-spacing:0.96px;-webkit-text-stroke:0.25px #222;">1.15</span>
<div style="left:905px;top:358px;width:50px;height:33px;border:1px solid #6fb6a4;border-radius:2.6px;background:#fff"></div>
<span style="left:927.31px;top:362px;font-size:11px;color:#444;-webkit-text-stroke:0.12px #444;">X</span>
<span style="left:917.59px;top:377px;font-size:12.8px;color:#222;letter-spacing:0.75px;-webkit-text-stroke:0.25px #222;">4.09</span>
<div style="left:239px;top:395px;width:720px;height:1px;background:#eeeeee;"></div>
<span style="left:239.05px;top:398px;font-size:11px;color:#444;letter-spacing:0.66px;-webkit-text-stroke:0.12px #444;">6.</span>
<span style="left:270.6px;top:399px;font-size:11px;color:#222;font-weight:700;transform:scaleX(0.948);-webkit-text-stroke:0.15px #222;">TOR-LAZ</span>
<span style="left:272.35px;top:412px;font-size:11px;color:#cfcfcf;letter-spacing:0.14px;-webkit-text-stroke:0.12px #cfcfcf;">AVV.102</span>
<svg style="left:341px;top:399px" width="20" height="20" viewBox="0 -0.2 20 20"><rect x="0.1" y="8" width="2.9" height="7.6" fill="#c2c2c2"/><rect x="4.6" y="5.1" width="2.9" height="10.5" fill="#c2c2c2"/><rect x="9.1" y="1" width="2.9" height="14.6" fill="#c2c2c2"/><rect x="13.5" y="8" width="2.9" height="7.6" fill="#c2c2c2"/><rect x="0" y="16.8" width="18" height="1" fill="#bdbdbd"/></svg>
<div style="left:361px;top:398px;width:51px;height:33px;border:1px solid #6fb6a4;border-radius:2.6px;background:#fff"></div>
<span style="left:384.28px;top:402px;font-size:11px;color:#444;-webkit-text-stroke:0.12px #444;">1</span>
<span style="left:373.71px;top:417px;font-size:12.8px;color:#222;letter-spacing:0.87px;-webkit-text-stroke:0.25px #222;">2.51</span>
<div style="left:415px;top:398px;width:50px;height:33px;border:1px solid #6fb6a4;border-radius:2.6px;background:#fff"></div>
<span style="left:437.31px;top:402px;font-size:11px;color:#444;-webkit-text-stroke:0.12px #444;">X</span>
<span style="left:427.4px;top:417px;font-size:12.8px;color:#222;letter-spacing:0.77px;-webkit-text-stroke:0.25px #222;">3.50</span>
<div style="left:468px;top:398px;width:51px;height:33px;border:1px solid #6fb6a4;border-radius:2.6px;background:#fff"></div>
<span style="left:491.42px;top:402px;font-size:11px;color:#444;-webkit-text-stroke:0.12px #444;">2</span>
<span style="left:480.71px;top:417px;font-size:12.8px;color:#222;letter-spacing:0.87px;-webkit-text-stroke:0.25px #222;">2.32</span>
<div style="left:525px;top:398px;width:50px;height:33px;border:1px solid #6fb6a4;border-radius:2.6px;background:#fff"></div>
<span style="left:536.9px;top:402px;font-size:11px;color:#444;transform:scaleX(0.916);-webkit-text-stroke:0.12px #444;">GOAL</span>
<span style="left:536.89px;top:417px;font-size:12.8px;color:#222;letter-spacing:0.96px;-webkit-text-stroke:0.25px #222;">1.63</span>
<div style="left:578px;top:398px;width:50px;height:33px;border:1px solid #6fb6a4;border-radius:2.6px;background:#fff"></div>
<span style="left:580.69px;top:402px;font-size:11px;color:#444;transform:scaleX(0.920);-webkit-text-stroke:0.12px #444;">NO GOAL</span>
<span style="left:590.21px;top:417px;font-size:12.8px;color:#222;letter-spacing:0.83px;-webkit-text-stroke:0.25px #222;">2.00</span>
<div style="left:634px;top:398px;width:50px;height:33px;border:1px solid #6fb6a4;border-radius:2.6px;background:#fff"></div>
<span style="left:652.77px;top:402px;font-size:11px;color:#444;letter-spacing:0.37px;-webkit-text-stroke:0.12px #444;">1X</span>
<span style="left:645.89px;top:417px;font-size:12.8px;color:#222;letter-spacing:0.96px;-webkit-text-stroke:0.25px #222;">1.46</span>
<div style="left:687px;top:398px;width:50px;height:33px;border:1px solid #6fb6a4;border-radius:2.6px;background:#fff"></div>
<span style="left:709.92px;top:402px;font-size:11px;color:#444;-webkit-text-stroke:0.12px #444;">2</span>
<span style="left:699.21px;top:417px;font-size:12.8px;color:#222;letter-spacing:0.87px;-webkit-text-stroke:0.25px #222;">2.32</span>
<div style="left:743px;top:398px;width:50px;height:33px;border:1px solid #6fb6a4;border-radius:2.6px;background:#fff"></div>
<span style="left:762.64px;top:402px;font-size:11px;color:#444;transform:scaleX(0.968);-webkit-text-stroke:0.12px #444;">X2</span>
<span style="left:754.89px;top:417px;font-size:12.8px;color:#222;letter-spacing:0.98px;-webkit-text-stroke:0.25px #222;">1.39</span>
<div style="left:796px;top:398px;width:50px;height:33px;border:1px solid #6fb6a4;border-radius:2.6px;background:#fff"></div>
<span style="left:818.78px;top:402px;font-size:11px;color:#444;-webkit-text-stroke:0.12px #444;">1</span>
<span style="left:808.21px;top:417px;font-size:12.8px;color:#222;letter-spacing:0.87px;-webkit-text-stroke:0.25px #222;">2.51</span>
<div style="left:852px;top:398px;width:50px;height:33px;border:1px solid #6fb6a4;border-radius:2.6px;background:#fff"></div>
<span style="left:871.27px;top:402px;font-size:11px;color:#444;letter-spacing:0.91px;-webkit-text-stroke:0.12px #444;">12</span>
<span style="left:863.89px;top:417px;font-size:12.8px;color:#222;letter-spacing:0.94px;-webkit-text-stroke:0.25px #222;">1.20</span>
<div style="left:905px;top:398px;width:50px;height:33px;border:1px solid #6fb6a4;border-radius:2.6px;background:#fff"></div>
<span style="left:927.31px;top:402px;font-size:11px;color:#444;-webkit-text-stroke:0.12px #444;">X</span>
<span style="left:917.4px;top:417px;font-size:12.8px;color:#222;letter-spacing:0.77px;-webkit-text-stroke:0.25px #222;">3.50</span>
<div style="left:239px;top:435px;width:720px;height:1px;background:#eeeeee;"></div>
<span style="left:837.84px;top:441px;font-size:13px;color:#12836a;letter-spacing:0.41px;-webkit-text-stroke:0.2px #12836a;">Tutti i mercati</span>
<div style="left:837.8px;top:453.1px;width:82.7px;height:1px;background:#12836a;"></div>
<svg style="left:932px;top:442px" width="11" height="13" viewBox="932 442 11 13"><path d="M934.2 444.7 L939.8 448.2 L934.2 451.7" fill="none" stroke="#12836a" stroke-width="1.35"/></svg>
<div style="left:239px;top:467px;width:720px;height:40px;background:#333333;"></div>
<svg style="left:245px;top:476px" width="21" height="21" viewBox="-10.5 -10.5 21 21"><circle r="8.5" fill="#b9bcd0"/><circle r="7.8" fill="#0b134e"/><polygon points="1.05,1.1 -0.42,3.65 -3.37,3.65 -4.85,1.1 -3.38,-1.45 -0.42,-1.45" fill="#5cefce"/><polygon points="5.3,-2.4 3.9,0.02 1.1,0.02 -0.3,-2.4 1.1,-4.82 3.9,-4.82" fill="#5cefce"/><polygon points="-1.2,-7.2 3.4,-7 4.3,-5.3 -0.4,-5.1" fill="#6df5e4"/><polygon points="-5.7,-4.6 -3,-6.9 -2.1,-5.7 -4.6,-3.6" fill="#6df5e4"/><polygon points="-7.3,-2.6 -5.1,-3.9 -3.9,-0.9 -5,1.2 -7.4,0.6" fill="#7cf9f1"/><polygon points="5.3,-2 7.4,-1.4 7.5,2.6 5.6,3.6 5,1" fill="#5cefce"/><polygon points="-3.9,4.5 1.5,4.5 1.9,7 -2.7,7.5" fill="#50ecc4"/><polygon points="2.5,5.6 5.2,3.8 6,4.9 3.2,7" fill="#50ecc4"/></svg>
<span style="left:280.57px;top:482px;font-size:11.2px;color:#fff;font-weight:700;transform:scaleX(0.964);-webkit-text-stroke:0.2px #fff;">GM K 3</span>
<span style="left:333.77px;top:482px;font-size:11.2px;color:#fff;font-weight:700;letter-spacing:0.14px;-webkit-text-stroke:0.2px #fff;">PAL. 2509908717</span>
<span style="left:441.77px;top:482px;font-size:11.2px;color:#fff;font-weight:700;letter-spacing:-0.06px;-webkit-text-stroke:0.2px #fff;">ROM-FIO</span>
<span style="left:506.32px;top:482px;font-size:11.2px;color:#fff;font-weight:700;letter-spacing:-0.03px;-webkit-text-stroke:0.2px #fff;">AVV. 179</span>
<span style="left:568.31px;top:482px;font-size:11.2px;color:#fff;font-weight:700;letter-spacing:0.39px;-webkit-text-stroke:0.2px #fff;">03:34</span>
<div style="left:272px;top:478px;width:1px;height:18px;background:#fff;"></div>
<div style="left:325px;top:478px;width:1px;height:18px;background:#fff;"></div>
<div style="left:434px;top:478px;width:1px;height:18px;background:#fff;"></div>
<div style="left:498px;top:478px;width:1px;height:18px;background:#fff;"></div>
<div style="left:560px;top:478px;width:1px;height:18px;background:#fff;"></div>
<svg style="left:941px;top:477px" width="13" height="17" viewBox="-6.3 -8.9 13 17"><path d="M-3.1 -5.3 L2.8 0 L-3.1 5.3" fill="none" stroke="#fff" stroke-width="2.5"/></svg>
<div style="left:239px;top:507px;width:720px;height:27px;background:#e5e5e5;"></div>
<span style="left:247.12px;top:514px;font-size:13px;color:#222;font-weight:700;letter-spacing:0.5px;-webkit-text-stroke:0.15px #222;">1X2</span>
<div style="left:246px;top:541px;width:229px;height:33px;border:1px solid #6fb6a4;border-radius:2.6px;background:#fff"></div>
<span style="left:358.28px;top:545px;font-size:11px;color:#555;-webkit-text-stroke:0.12px #555;">1</span>
<span style="left:347.39px;top:560px;font-size:12.8px;color:#222;letter-spacing:0.96px;-webkit-text-stroke:0.25px #222;">1.96</span>
<div style="left:483px;top:541px;width:230px;height:33px;border:1px solid #6fb6a4;border-radius:2.6px;background:#fff"></div>
<span style="left:595.31px;top:545px;font-size:11px;color:#555;-webkit-text-stroke:0.12px #555;">X</span>
<span style="left:585.4px;top:560px;font-size:12.8px;color:#222;letter-spacing:0.81px;-webkit-text-stroke:0.25px #222;">3.37</span>
<div style="left:721px;top:541px;width:229px;height:33px;border:1px solid #6fb6a4;border-radius:2.6px;background:#fff"></div>
<span style="left:833.42px;top:545px;font-size:11px;color:#555;-webkit-text-stroke:0.12px #555;">2</span>
<span style="left:822.9px;top:560px;font-size:12.8px;color:#222;letter-spacing:0.79px;-webkit-text-stroke:0.25px #222;">3.03</span>
<span style="left:837.84px;top:588px;font-size:13px;color:#12836a;letter-spacing:0.41px;-webkit-text-stroke:0.2px #12836a;">Tutti i mercati</span>
<div style="left:837.8px;top:600.1px;width:82.7px;height:1px;background:#12836a;"></div>
<svg style="left:932px;top:589px" width="11" height="13" viewBox="932 589 11 13"><path d="M934.2 591.7 L939.8 595.2 L934.2 598.7" fill="none" stroke="#12836a" stroke-width="1.35"/></svg>
<div style="left:239px;top:614px;width:720px;height:40px;background:#333333;"></div>
<svg style="left:245px;top:623px" width="21" height="21" viewBox="-10.5 -10.5 21 21"><circle r="8.5" fill="#b9bcd0"/><circle r="7.8" fill="#0b134e"/><polygon points="1.05,1.1 -0.42,3.65 -3.37,3.65 -4.85,1.1 -3.38,-1.45 -0.42,-1.45" fill="#5cefce"/><polygon points="5.3,-2.4 3.9,0.02 1.1,0.02 -0.3,-2.4 1.1,-4.82 3.9,-4.82" fill="#5cefce"/><polygon points="-1.2,-7.2 3.4,-7 4.3,-5.3 -0.4,-5.1" fill="#6df5e4"/><polygon points="-5.7,-4.6 -3,-6.9 -2.1,-5.7 -4.6,-3.6" fill="#6df5e4"/><polygon points="-7.3,-2.6 -5.1,-3.9 -3.9,-0.9 -5,1.2 -7.4,0.6" fill="#7cf9f1"/><polygon points="5.3,-2 7.4,-1.4 7.5,2.6 5.6,3.6 5,1" fill="#5cefce"/><polygon points="-3.9,4.5 1.5,4.5 1.9,7 -2.7,7.5" fill="#50ecc4"/><polygon points="2.5,5.6 5.2,3.8 6,4.9 3.2,7" fill="#50ecc4"/></svg>
<span style="left:280.57px;top:629px;font-size:11.2px;color:#fff;font-weight:700;transform:scaleX(0.954);-webkit-text-stroke:0.2px #fff;">GM K 4</span>
<span style="left:333.77px;top:629px;font-size:11.2px;color:#fff;font-weight:700;letter-spacing:0.14px;-webkit-text-stroke:0.2px #fff;">PAL. 2509908717</span>
<span style="left:442.05px;top:629px;font-size:11.2px;color:#fff;font-weight:700;letter-spacing:0.01px;-webkit-text-stroke:0.2px #fff;">GEN-UDI</span>
<span style="left:505.62px;top:629px;font-size:11.2px;color:#fff;font-weight:700;letter-spacing:-0.05px;-webkit-text-stroke:0.2px #fff;">AVV. 180</span>
<span style="left:567.61px;top:629px;font-size:11.2px;color:#fff;font-weight:700;letter-spacing:0.39px;-webkit-text-stroke:0.2px #fff;">03:34</span>
<div style="left:272px;top:625px;width:1px;height:18px;background:#fff;"></div>
<div style="left:325px;top:625px;width:1px;height:18px;background:#fff;"></div>
<div style="left:434px;top:625px;width:1px;height:18px;background:#fff;"></div>
<div style="left:497px;top:625px;width:1px;height:18px;background:#fff;"></div>
<div style="left:559px;top:625px;width:1px;height:18px;background:#fff;"></div>
<svg style="left:941px;top:624px" width="13" height="17" viewBox="-6.3 -8.9 13 17"><path d="M-3.1 -5.3 L2.8 0 L-3.1 5.3" fill="none" stroke="#fff" stroke-width="2.5"/></svg>
<div style="left:239px;top:654px;width:720px;height:27px;background:#e5e5e5;"></div>
<span style="left:247.12px;top:661px;font-size:13px;color:#222;font-weight:700;letter-spacing:0.5px;-webkit-text-stroke:0.15px #222;">1X2</span>
<div style="left:246px;top:688px;width:229px;height:33px;border:1px solid #6fb6a4;border-radius:2.6px;background:#fff"></div>
<span style="left:358.28px;top:692px;font-size:11px;color:#555;-webkit-text-stroke:0.12px #555;">1</span>
<span style="left:347.71px;top:707px;font-size:12.8px;color:#222;letter-spacing:0.87px;-webkit-text-stroke:0.25px #222;">2.02</span>
<div style="left:483px;top:688px;width:230px;height:33px;border:1px solid #6fb6a4;border-radius:2.6px;background:#fff"></div>
<span style="left:595.31px;top:692px;font-size:11px;color:#555;-webkit-text-stroke:0.12px #555;">X</span>
<span style="left:585.4px;top:707px;font-size:12.8px;color:#222;letter-spacing:0.81px;-webkit-text-stroke:0.25px #222;">3.32</span>
<div style="left:721px;top:688px;width:229px;height:33px;border:1px solid #6fb6a4;border-radius:2.6px;background:#fff"></div>
<span style="left:833.42px;top:692px;font-size:11px;color:#555;-webkit-text-stroke:0.12px #555;">2</span>
<span style="left:822.71px;top:707px;font-size:12.8px;color:#222;letter-spacing:0.85px;-webkit-text-stroke:0.25px #222;">2.95</span>
<span style="left:837.84px;top:735px;font-size:13px;color:#12836a;letter-spacing:0.41px;-webkit-text-stroke:0.2px #12836a;">Tutti i mercati</span>
<div style="left:837.8px;top:747.1px;width:82.7px;height:1px;background:#12836a;"></div>
<svg style="left:932px;top:736px" width="11" height="13" viewBox="932 736 11 13"><path d="M934.2 738.7 L939.8 742.2 L934.2 745.7" fill="none" stroke="#12836a" stroke-width="1.35"/></svg>
<div style="left:967px;top:45px;width:589px;height:40px;background:#333333;"></div>
<svg style="left:973px;top:54px" width="22" height="22" viewBox="3 4 22 22"><path d="M9.5 6.2 L11.6 6.8 L15.4 7.5 L19.7 10.3 L21.9 14.4 L22.1 22.7 L13.1 22.7 L13.2 16.4 L11.3 16.3 L7.4 19.6 L5 17.9 L7.5 12 L8.9 8.2 Z" fill="#dfe1ee"/><path d="M9.9 7.2 L11.6 7.6 L15.1 8.3 L19.1 10.9 L21.1 14.6 L21.3 21.9 L14.1 21.9 L14.2 15.5 L11 15.5 L7.4 18.5 L6.1 17.6 L8.3 12.2 L9.4 8.9 Z" fill="#c27a2b" stroke="#1b1f5e" stroke-width="0.55" stroke-linejoin="round"/><path d="M14.5 15.8 L14.5 21.6" stroke="#1b1f5e" stroke-width="0.9"/><path d="M10.6 15.2 L13.2 14.9 L14.2 13.2 L14.3 12.2" fill="none" stroke="#1b1f5e" stroke-width="0.7"/><circle cx="11.6" cy="11.6" r="0.5" fill="#1b1f5e"/></svg>
<span style="left:1008.67px;top:60px;font-size:11.2px;color:#fff;font-weight:700;transform:scaleX(0.967);-webkit-text-stroke:0.2px #fff;">CAVALLI</span>
<span style="left:1069.37px;top:60px;font-size:11.2px;color:#fff;font-weight:700;letter-spacing:0.13px;-webkit-text-stroke:0.2px #fff;">PAL. 2509908736</span>
<span style="left:1178.43px;top:60px;font-size:11.2px;color:#fff;font-weight:700;transform:scaleX(0.979);-webkit-text-stroke:0.2px #fff;">AVV. 54</span>
<span style="left:1234.31px;top:60px;font-size:11.2px;color:#fff;font-weight:700;letter-spacing:0.32px;-webkit-text-stroke:0.2px #fff;">01:34</span>
<div style="left:1000px;top:56px;width:1px;height:18px;background:#fff;"></div>
<div style="left:1061px;top:56px;width:1px;height:18px;background:#fff;"></div>
<div style="left:1170px;top:56px;width:1px;height:18px;background:#fff;"></div>
<div style="left:1226px;top:56px;width:1px;height:18px;background:#fff;"></div>
<svg style="left:1538px;top:55px" width="13" height="17" viewBox="-6.3 -8.9 13 17"><path d="M-3.1 -5.3 L2.8 0 L-3.1 5.3" fill="none" stroke="#fff" stroke-width="2.5"/></svg>
<div style="left:967px;top:85px;width:146px;height:40px;background:#fff;"></div>
<div style="left:967px;top:120px;width:146px;height:5px;background:#028568;"></div>
<div style="left:1113px;top:85px;width:1px;height:40px;background:#f3efef;"></div>
<div style="left:1114px;top:85px;width:147px;height:40px;background:#e5e5e5;"></div>
<div style="left:1261px;top:85px;width:1px;height:40px;background:#f3efef;"></div>
<div style="left:1262px;top:85px;width:146px;height:40px;background:#e5e5e5;"></div>
<div style="left:1408px;top:85px;width:1px;height:40px;background:#f3efef;"></div>
<div style="left:1409px;top:85px;width:146px;height:40px;background:#e5e5e5;"></div>
<div style="left:1555px;top:85px;width:1px;height:40px;background:#e5e5e5;"></div>
<div style="left:967px;top:125px;width:589px;height:1px;background:#f3efef;"></div>
<div style="left:967px;top:126px;width:589px;height:40px;background:#f2f2f2;"></div>
<div style="left:967px;top:126px;width:146px;height:40px;background:#e5e5e5;"></div>
<div style="left:1113px;top:126px;width:1px;height:40px;background:#f3efef;"></div>
<div style="left:1114px;top:126px;width:147px;height:40px;background:#e5e5e5;"></div>
<div style="left:1261px;top:126px;width:1px;height:40px;background:#f3efef;"></div>
<span style="left:977.55px;top:99px;font-size:13px;color:#222;font-weight:700;letter-spacing:0.05px;-webkit-text-stroke:0.15px #222;">PRINCIPALE</span>
<span style="left:1125.54px;top:99px;font-size:13px;color:#333;letter-spacing:-0.11px;-webkit-text-stroke:0.12px #333;">TRIS IN ORDINE</span>
<span style="left:1273.3px;top:92px;font-size:13px;color:#333;transform:scaleX(0.983);-webkit-text-stroke:0.12px #333;">ACCOPPIATA IN</span>
<span style="left:1272.73px;top:105px;font-size:13px;color:#333;transform:scaleX(0.978);-webkit-text-stroke:0.12px #333;">ORDINE</span>
<span style="left:1420.8px;top:92px;font-size:13px;color:#333;transform:scaleX(0.974);-webkit-text-stroke:0.12px #333;">ACCOPPIATA NON IN</span>
<span style="left:1420.23px;top:105px;font-size:13px;color:#333;transform:scaleX(0.978);-webkit-text-stroke:0.12px #333;">ORDINE</span>
<span style="left:977.85px;top:133px;font-size:13px;color:#333;transform:scaleX(0.932);-webkit-text-stroke:0.12px #333;">SOMMA</span>
<span style="left:977.36px;top:146px;font-size:13px;color:#333;letter-spacing:0.16px;-webkit-text-stroke:0.12px #333;">PIAZZAMENTI</span>
<span style="left:1124.76px;top:140px;font-size:13px;color:#333;letter-spacing:0.38px;-webkit-text-stroke:0.12px #333;">DISPARI/PARI</span>
<div style="left:1067px;top:176px;width:1px;height:13px;background:#222;"></div>
<div style="left:1178px;top:176px;width:1px;height:13px;background:#222;"></div>
<div style="left:1246px;top:176px;width:1px;height:13px;background:#222;"></div>
<div style="left:1356px;top:176px;width:1px;height:13px;background:#222;"></div>
<div style="left:1423px;top:176px;width:1px;height:13px;background:#222;"></div>
<div style="left:1489px;top:176px;width:1px;height:13px;background:#222;"></div>
<span style="left:1086.88px;top:177px;font-size:11px;color:#484040;letter-spacing:0.37px;-webkit-text-stroke:0.12px #484040;">Ultimi risultati</span>
<span style="left:1182.42px;top:177px;font-size:11px;color:#484040;letter-spacing:0.02px;-webkit-text-stroke:0.12px #484040;">Prestazione</span>
<span style="left:1272.5px;top:177px;font-size:11px;color:#484040;letter-spacing:0.05px;-webkit-text-stroke:0.12px #484040;">Valutazione</span>
<span style="left:1362.8px;top:177px;font-size:11px;color:#333;transform:scaleX(0.968);-webkit-text-stroke:0.12px #333;">VINCENTE</span>
<span style="left:1429.32px;top:172px;font-size:11px;color:#333;letter-spacing:0.03px;-webkit-text-stroke:0.12px #333;">PIAZZATO</span>
<span style="left:1444.28px;top:183px;font-size:11px;color:#333;transform:scaleX(0.952);-webkit-text-stroke:0.12px #333;">SU 2</span>
<span style="left:1495.92px;top:172px;font-size:11px;color:#333;letter-spacing:0.03px;-webkit-text-stroke:0.12px #333;">PIAZZATO</span>
<span style="left:1510.88px;top:183px;font-size:11px;color:#333;transform:scaleX(0.950);-webkit-text-stroke:0.12px #333;">SU 3</span>
<div style="left:967px;top:199px;width:589px;height:1px;background:#303030;"></div>
<div style="left:972px;top:212px;width:21px;height:21px;background:#ed1c24;"></div>
<span style="left:978.58px;top:216px;font-size:16.6px;color:#fff;font-weight:700;transform:scaleX(0.820);-webkit-text-stroke:0.2px #fff;">1</span>
<span style="left:997.49px;top:217px;font-size:11px;color:#222;font-weight:700;letter-spacing:-0.04px;-webkit-text-stroke:0.15px #222;">Bilancia</span>
<div style="left:1073.9px;top:215px;width:17px;height:17px;border-radius:50%;background:#d2d6dc"></div>
<span style="left:1079.38px;top:218px;font-size:11px;color:#3c4452;font-weight:700;-webkit-text-stroke:0.15px #3c4452;">2</span>
<div style="left:1093.9px;top:215px;width:17px;height:17px;border-radius:50%;background:#d2d6dc"></div>
<span style="left:1099.38px;top:218px;font-size:11px;color:#3c4452;font-weight:700;-webkit-text-stroke:0.15px #3c4452;">2</span>
<div style="left:1113.9px;top:215px;width:17px;height:17px;border-radius:50%;background:#a44c22"></div>
<span style="left:1119.43px;top:218px;font-size:11px;color:#fff;font-weight:700;-webkit-text-stroke:0.2px #fff;">3</span>
<div style="left:1133.9px;top:215px;width:17px;height:17px;border-radius:50%;background:#a44c22"></div>
<span style="left:1139.43px;top:218px;font-size:11px;color:#fff;font-weight:700;-webkit-text-stroke:0.2px #fff;">3</span>
<div style="left:1153.9px;top:215px;width:17px;height:17px;border-radius:50%;background:#ffcc00"></div>
<span style="left:1159.15px;top:218px;font-size:11px;color:#3c4250;font-weight:700;-webkit-text-stroke:0.15px #3c4250;">1</span>
<span style="left:1179.87px;top:218px;font-size:11px;color:#222;font-weight:700;letter-spacing:0.85px;-webkit-text-stroke:0.15px #222;">94%</span>
<div style="left:1207px;top:219px;width:37px;height:8px;background:#e2f0ec;"></div>
<div style="left:1207px;top:219px;width:35.18px;height:8px;background:#028568;"></div>
<span style="left:1247.77px;top:218px;font-size:11px;color:#222;font-weight:700;letter-spacing:1.56px;-webkit-text-stroke:0.15px #222;">5/5</span>
<svg style="left:1269px;top:215px" width="17" height="17" viewBox="-8.7 -8.2 17 17"><polygon points="0,-7.9 1.91,-2.63 7.51,-2.44 3.09,1 4.64,6.39 0,3.25 -4.64,6.39 -3.09,1 -7.51,-2.44 -1.91,-2.63" fill="#222"/></svg>
<svg style="left:1286px;top:215px" width="17" height="17" viewBox="-8.7 -8.2 17 17"><polygon points="0,-7.9 1.91,-2.63 7.51,-2.44 3.09,1 4.64,6.39 0,3.25 -4.64,6.39 -3.09,1 -7.51,-2.44 -1.91,-2.63" fill="#222"/></svg>
<svg style="left:1303px;top:215px" width="17" height="17" viewBox="-8.7 -8.2 17 17"><polygon points="0,-7.9 1.91,-2.63 7.51,-2.44 3.09,1 4.64,6.39 0,3.25 -4.64,6.39 -3.09,1 -7.51,-2.44 -1.91,-2.63" fill="#222"/></svg>
<svg style="left:1320px;top:215px" width="17" height="17" viewBox="-8.7 -8.2 17 17"><polygon points="0,-7.9 1.91,-2.63 7.51,-2.44 3.09,1 4.64,6.39 0,3.25 -4.64,6.39 -3.09,1 -7.51,-2.44 -1.91,-2.63" fill="#222"/></svg>
<svg style="left:1337px;top:215px" width="17" height="17" viewBox="-8.7 -8.2 17 17"><polygon points="0,-7.9 1.91,-2.63 7.51,-2.44 3.09,1 4.64,6.39 0,3.25 -4.64,6.39 -3.09,1 -7.51,-2.44 -1.91,-2.63" fill="#222"/></svg>
<div style="left:1357px;top:201px;width:63px;height:41px;border:1px solid #6fb6a4;border-radius:2.6px;background:#fff"></div>
<span style="left:1375.36px;top:217px;font-size:12.8px;color:#222;letter-spacing:0.97px;-webkit-text-stroke:0.25px #222;">2.27</span>
<div style="left:1424px;top:201px;width:62px;height:41px;border:1px solid #6fb6a4;border-radius:2.6px;background:#fff"></div>
<span style="left:1441.54px;top:217px;font-size:12.8px;color:#222;letter-spacing:1.08px;-webkit-text-stroke:0.25px #222;">1.31</span>
<div style="left:1490px;top:201px;width:63px;height:41px;border:1px solid #6fb6a4;border-radius:2.6px;background:#fff"></div>
<span style="left:1508.04px;top:217px;font-size:12.8px;color:#222;letter-spacing:1.06px;-webkit-text-stroke:0.25px #222;">1.03</span>
<div style="left:967px;top:245px;width:100px;height:1px;background:#ececec;"></div>
<div style="left:1356px;top:245px;width:200px;height:1px;background:#ececec;"></div>
<div style="left:972px;top:258px;width:21px;height:21px;background:#c9c9c9;"></div>
<span style="left:977.16px;top:262px;font-size:16.6px;color:#000;font-weight:700;transform:scaleX(1.193);-webkit-text-stroke:0.15px #000;">2</span>
<span style="left:997.49px;top:263px;font-size:11px;color:#222;font-weight:700;letter-spacing:0.15px;-webkit-text-stroke:0.15px #222;">Bulletto</span>
<div style="left:1073.9px;top:261px;width:17px;height:17px;border-radius:50%;background:#b71b1b"></div>
<span style="left:1078.91px;top:264px;font-size:10.5px;color:#fff;font-weight:700;-webkit-text-stroke:0.2px #fff;">X</span>
<div style="left:1093.9px;top:261px;width:17px;height:17px;border-radius:50%;background:#b71b1b"></div>
<span style="left:1098.91px;top:264px;font-size:10.5px;color:#fff;font-weight:700;-webkit-text-stroke:0.2px #fff;">X</span>
<div style="left:1113.9px;top:261px;width:17px;height:17px;border-radius:50%;background:#b71b1b"></div>
<span style="left:1118.91px;top:264px;font-size:10.5px;color:#fff;font-weight:700;-webkit-text-stroke:0.2px #fff;">X</span>
<div style="left:1133.9px;top:261px;width:17px;height:17px;border-radius:50%;background:#b71b1b"></div>
<span style="left:1138.91px;top:264px;font-size:10.5px;color:#fff;font-weight:700;-webkit-text-stroke:0.2px #fff;">X</span>
<div style="left:1153.9px;top:261px;width:17px;height:17px;border-radius:50%;background:#b71b1b"></div>
<span style="left:1158.91px;top:264px;font-size:10.5px;color:#fff;font-weight:700;-webkit-text-stroke:0.2px #fff;">X</span>
<span style="left:1179.87px;top:264px;font-size:11px;color:#222;font-weight:700;letter-spacing:0.85px;-webkit-text-stroke:0.15px #222;">27%</span>
<div style="left:1207px;top:265px;width:37px;height:8px;background:#e2f0ec;"></div>
<div style="left:1207px;top:265px;width:10.39px;height:8px;background:#028568;"></div>
<span style="left:1247.77px;top:264px;font-size:11px;color:#222;font-weight:700;letter-spacing:1.56px;-webkit-text-stroke:0.15px #222;">2/5</span>
<svg style="left:1269px;top:261px" width="17" height="17" viewBox="-8.7 -8.2 17 17"><polygon points="0,-7.9 1.91,-2.63 7.51,-2.44 3.09,1 4.64,6.39 0,3.25 -4.64,6.39 -3.09,1 -7.51,-2.44 -1.91,-2.63" fill="#222"/></svg>
<svg style="left:1286px;top:261px" width="17" height="17" viewBox="-8.7 -8.2 17 17"><polygon points="0,-7.9 1.91,-2.63 7.51,-2.44 3.09,1 4.64,6.39 0,3.25 -4.64,6.39 -3.09,1 -7.51,-2.44 -1.91,-2.63" fill="#222"/></svg>
<svg style="left:1303px;top:261px" width="17" height="17" viewBox="-8.7 -8.2 17 17"><polygon points="0,-6.3 1.59,-2.18 5.99,-1.95 2.57,0.83 3.7,5.1 0,2.7 -3.7,5.1 -2.57,0.83 -5.99,-1.95 -1.59,-2.18" fill="#fff" stroke="#222" stroke-width="1.2" stroke-linejoin="miter"/></svg>
<svg style="left:1320px;top:261px" width="17" height="17" viewBox="-8.7 -8.2 17 17"><polygon points="0,-6.3 1.59,-2.18 5.99,-1.95 2.57,0.83 3.7,5.1 0,2.7 -3.7,5.1 -2.57,0.83 -5.99,-1.95 -1.59,-2.18" fill="#fff" stroke="#222" stroke-width="1.2" stroke-linejoin="miter"/></svg>
<svg style="left:1337px;top:261px" width="17" height="17" viewBox="-8.7 -8.2 17 17"><polygon points="0,-6.3 1.59,-2.18 5.99,-1.95 2.57,0.83 3.7,5.1 0,2.7 -3.7,5.1 -2.57,0.83 -5.99,-1.95 -1.59,-2.18" fill="#fff" stroke="#222" stroke-width="1.2" stroke-linejoin="miter"/></svg>
<div style="left:1357px;top:247px;width:63px;height:41px;border:1px solid #6fb6a4;border-radius:2.6px;background:#fff"></div>
<span style="left:1371.44px;top:263px;font-size:12.8px;color:#222;letter-spacing:0.8px;-webkit-text-stroke:0.25px #222;">18.20</span>
<div style="left:1424px;top:247px;width:62px;height:41px;border:1px solid #6fb6a4;border-radius:2.6px;background:#fff"></div>
<span style="left:1441.86px;top:263px;font-size:12.8px;color:#222;letter-spacing:0.97px;-webkit-text-stroke:0.25px #222;">7.81</span>
<div style="left:1490px;top:247px;width:63px;height:41px;border:1px solid #6fb6a4;border-radius:2.6px;background:#fff"></div>
<span style="left:1508.74px;top:263px;font-size:12.8px;color:#222;letter-spacing:0.82px;-webkit-text-stroke:0.25px #222;">4.33</span>
<div style="left:967px;top:291px;width:100px;height:1px;background:#ececec;"></div>
<div style="left:1356px;top:291px;width:200px;height:1px;background:#ececec;"></div>
<div style="left:972px;top:304px;width:21px;height:21px;background:#0033b7;"></div>
<span style="left:977.09px;top:308px;font-size:16.6px;color:#fff;font-weight:700;transform:scaleX(1.229);-webkit-text-stroke:0.2px #fff;">3</span>
<span style="left:997.49px;top:309px;font-size:11px;color:#222;font-weight:700;-webkit-text-stroke:0.15px #222;">Prmus</span>
<div style="left:1073.9px;top:307px;width:17px;height:17px;border-radius:50%;background:#b71b1b"></div>
<span style="left:1078.91px;top:310px;font-size:10.5px;color:#fff;font-weight:700;-webkit-text-stroke:0.2px #fff;">X</span>
<div style="left:1093.9px;top:307px;width:17px;height:17px;border-radius:50%;background:#b71b1b"></div>
<span style="left:1098.91px;top:310px;font-size:10.5px;color:#fff;font-weight:700;-webkit-text-stroke:0.2px #fff;">X</span>
<div style="left:1113.9px;top:307px;width:17px;height:17px;border-radius:50%;background:#b71b1b"></div>
<span style="left:1118.91px;top:310px;font-size:10.5px;color:#fff;font-weight:700;-webkit-text-stroke:0.2px #fff;">X</span>
<div style="left:1133.9px;top:307px;width:17px;height:17px;border-radius:50%;background:#b71b1b"></div>
<span style="left:1138.91px;top:310px;font-size:10.5px;color:#fff;font-weight:700;-webkit-text-stroke:0.2px #fff;">X</span>
<div style="left:1153.9px;top:307px;width:17px;height:17px;border-radius:50%;background:#b71b1b"></div>
<span style="left:1158.91px;top:310px;font-size:10.5px;color:#fff;font-weight:700;-webkit-text-stroke:0.2px #fff;">X</span>
<span style="left:1179.87px;top:310px;font-size:11px;color:#222;font-weight:700;letter-spacing:0.85px;-webkit-text-stroke:0.15px #222;">22%</span>
<div style="left:1207px;top:311px;width:37px;height:8px;background:#e2f0ec;"></div>
<div style="left:1207px;top:311px;width:8.54px;height:8px;background:#028568;"></div>
<span style="left:1247.44px;top:310px;font-size:11px;color:#222;font-weight:700;letter-spacing:1.72px;-webkit-text-stroke:0.15px #222;">1/5</span>
<svg style="left:1269px;top:307px" width="17" height="17" viewBox="-8.7 -8.2 17 17"><polygon points="0,-7.9 1.91,-2.63 7.51,-2.44 3.09,1 4.64,6.39 0,3.25 -4.64,6.39 -3.09,1 -7.51,-2.44 -1.91,-2.63" fill="#222"/></svg>
<svg style="left:1286px;top:307px" width="17" height="17" viewBox="-8.7 -8.2 17 17"><polygon points="0,-6.3 1.59,-2.18 5.99,-1.95 2.57,0.83 3.7,5.1 0,2.7 -3.7,5.1 -2.57,0.83 -5.99,-1.95 -1.59,-2.18" fill="#fff" stroke="#222" stroke-width="1.2" stroke-linejoin="miter"/></svg>
<svg style="left:1303px;top:307px" width="17" height="17" viewBox="-8.7 -8.2 17 17"><polygon points="0,-6.3 1.59,-2.18 5.99,-1.95 2.57,0.83 3.7,5.1 0,2.7 -3.7,5.1 -2.57,0.83 -5.99,-1.95 -1.59,-2.18" fill="#fff" stroke="#222" stroke-width="1.2" stroke-linejoin="miter"/></svg>
<svg style="left:1320px;top:307px" width="17" height="17" viewBox="-8.7 -8.2 17 17"><polygon points="0,-6.3 1.59,-2.18 5.99,-1.95 2.57,0.83 3.7,5.1 0,2.7 -3.7,5.1 -2.57,0.83 -5.99,-1.95 -1.59,-2.18" fill="#fff" stroke="#222" stroke-width="1.2" stroke-linejoin="miter"/></svg>
<svg style="left:1337px;top:307px" width="17" height="17" viewBox="-8.7 -8.2 17 17"><polygon points="0,-6.3 1.59,-2.18 5.99,-1.95 2.57,0.83 3.7,5.1 0,2.7 -3.7,5.1 -2.57,0.83 -5.99,-1.95 -1.59,-2.18" fill="#fff" stroke="#222" stroke-width="1.2" stroke-linejoin="miter"/></svg>
<div style="left:1357px;top:293px;width:63px;height:41px;border:1px solid #6fb6a4;border-radius:2.6px;background:#fff"></div>
<span style="left:1371.76px;top:309px;font-size:12.8px;color:#222;letter-spacing:0.72px;-webkit-text-stroke:0.25px #222;">62.50</span>
<div style="left:1424px;top:293px;width:62px;height:41px;border:1px solid #6fb6a4;border-radius:2.6px;background:#fff"></div>
<span style="left:1438.26px;top:309px;font-size:12.8px;color:#222;letter-spacing:0.72px;-webkit-text-stroke:0.25px #222;">26.40</span>
<div style="left:1490px;top:293px;width:63px;height:41px;border:1px solid #6fb6a4;border-radius:2.6px;background:#fff"></div>
<span style="left:1504.44px;top:309px;font-size:12.8px;color:#222;letter-spacing:0.8px;-webkit-text-stroke:0.25px #222;">14.30</span>
<div style="left:967px;top:337px;width:100px;height:1px;background:#ececec;"></div>
<div style="left:1356px;top:337px;width:200px;height:1px;background:#ececec;"></div>
<div style="left:972px;top:350px;width:21px;height:21px;background:#f7941d;"></div>
<span style="left:976.53px;top:354px;font-size:16.6px;color:#000;font-weight:700;transform:scaleX(1.283);-webkit-text-stroke:0.15px #000;">4</span>
<span style="left:997.49px;top:355px;font-size:11px;color:#222;font-weight:700;letter-spacing:-0.12px;-webkit-text-stroke:0.15px #222;">Ra</span>
<div style="left:1073.9px;top:353px;width:17px;height:17px;border-radius:50%;background:#d2d6dc"></div>
<span style="left:1079.38px;top:356px;font-size:11px;color:#3c4452;font-weight:700;-webkit-text-stroke:0.15px #3c4452;">2</span>
<div style="left:1093.9px;top:353px;width:17px;height:17px;border-radius:50%;background:#a44c22"></div>
<span style="left:1099.43px;top:356px;font-size:11px;color:#fff;font-weight:700;-webkit-text-stroke:0.2px #fff;">3</span>
<div style="left:1113.9px;top:353px;width:17px;height:17px;border-radius:50%;background:#ffcc00"></div>
<span style="left:1119.15px;top:356px;font-size:11px;color:#3c4250;font-weight:700;-webkit-text-stroke:0.15px #3c4250;">1</span>
<div style="left:1133.9px;top:353px;width:17px;height:17px;border-radius:50%;background:#a44c22"></div>
<span style="left:1139.43px;top:356px;font-size:11px;color:#fff;font-weight:700;-webkit-text-stroke:0.2px #fff;">3</span>
<div style="left:1153.9px;top:353px;width:17px;height:17px;border-radius:50%;background:#ffcc00"></div>
<span style="left:1159.15px;top:356px;font-size:11px;color:#3c4250;font-weight:700;-webkit-text-stroke:0.15px #3c4250;">1</span>
<span style="left:1180.04px;top:356px;font-size:11px;color:#222;font-weight:700;letter-spacing:0.77px;-webkit-text-stroke:0.15px #222;">47%</span>
<div style="left:1207px;top:357px;width:37px;height:8px;background:#e2f0ec;"></div>
<div style="left:1207px;top:357px;width:17.79px;height:8px;background:#028568;"></div>
<span style="left:1247.88px;top:356px;font-size:11px;color:#222;font-weight:700;letter-spacing:1.5px;-webkit-text-stroke:0.15px #222;">3/5</span>
<svg style="left:1269px;top:353px" width="17" height="17" viewBox="-8.7 -8.2 17 17"><polygon points="0,-7.9 1.91,-2.63 7.51,-2.44 3.09,1 4.64,6.39 0,3.25 -4.64,6.39 -3.09,1 -7.51,-2.44 -1.91,-2.63" fill="#222"/></svg>
<svg style="left:1286px;top:353px" width="17" height="17" viewBox="-8.7 -8.2 17 17"><polygon points="0,-7.9 1.91,-2.63 7.51,-2.44 3.09,1 4.64,6.39 0,3.25 -4.64,6.39 -3.09,1 -7.51,-2.44 -1.91,-2.63" fill="#222"/></svg>
<svg style="left:1303px;top:353px" width="17" height="17" viewBox="-8.7 -8.2 17 17"><polygon points="0,-7.9 1.91,-2.63 7.51,-2.44 3.09,1 4.64,6.39 0,3.25 -4.64,6.39 -3.09,1 -7.51,-2.44 -1.91,-2.63" fill="#222"/></svg>
<svg style="left:1320px;top:353px" width="17" height="17" viewBox="-8.7 -8.2 17 17"><polygon points="0,-6.3 1.59,-2.18 5.99,-1.95 2.57,0.83 3.7,5.1 0,2.7 -3.7,5.1 -2.57,0.83 -5.99,-1.95 -1.59,-2.18" fill="#fff" stroke="#222" stroke-width="1.2" stroke-linejoin="miter"/></svg>
<svg style="left:1337px;top:353px" width="17" height="17" viewBox="-8.7 -8.2 17 17"><polygon points="0,-6.3 1.59,-2.18 5.99,-1.95 2.57,0.83 3.7,5.1 0,2.7 -3.7,5.1 -2.57,0.83 -5.99,-1.95 -1.59,-2.18" fill="#fff" stroke="#222" stroke-width="1.2" stroke-linejoin="miter"/></svg>
<div style="left:1357px;top:339px;width:63px;height:41px;border:1px solid #6fb6a4;border-radius:2.6px;background:#fff"></div>
<span style="left:1375.49px;top:355px;font-size:12.8px;color:#222;letter-spacing:0.93px;-webkit-text-stroke:0.25px #222;">5.01</span>
<div style="left:1424px;top:339px;width:62px;height:41px;border:1px solid #6fb6a4;border-radius:2.6px;background:#fff"></div>
<span style="left:1441.86px;top:355px;font-size:12.8px;color:#222;letter-spacing:0.97px;-webkit-text-stroke:0.25px #222;">2.32</span>
<div style="left:1490px;top:339px;width:63px;height:41px;border:1px solid #6fb6a4;border-radius:2.6px;background:#fff"></div>
<span style="left:1508.04px;top:355px;font-size:12.8px;color:#222;letter-spacing:1.06px;-webkit-text-stroke:0.25px #222;">1.45</span>
<div style="left:967px;top:383px;width:100px;height:1px;background:#ececec;"></div>
<div style="left:1356px;top:383px;width:200px;height:1px;background:#ececec;"></div>
<div style="left:972px;top:396px;width:21px;height:21px;background:#0b9a2f;"></div>
<span style="left:976.89px;top:400px;font-size:16.6px;color:#fff;font-weight:700;transform:scaleX(1.229);-webkit-text-stroke:0.2px #fff;">5</span>
<span style="left:997.49px;top:401px;font-size:11px;color:#222;font-weight:700;letter-spacing:-0.08px;-webkit-text-stroke:0.15px #222;">Renoir</span>
<div style="left:1073.9px;top:399px;width:17px;height:17px;border-radius:50%;background:#b71b1b"></div>
<span style="left:1078.91px;top:402px;font-size:10.5px;color:#fff;font-weight:700;-webkit-text-stroke:0.2px #fff;">X</span>
<div style="left:1093.9px;top:399px;width:17px;height:17px;border-radius:50%;background:#ffcc00"></div>
<span style="left:1099.15px;top:402px;font-size:11px;color:#3c4250;font-weight:700;-webkit-text-stroke:0.15px #3c4250;">1</span>
<div style="left:1113.9px;top:399px;width:17px;height:17px;border-radius:50%;background:#b71b1b"></div>
<span style="left:1118.91px;top:402px;font-size:10.5px;color:#fff;font-weight:700;-webkit-text-stroke:0.2px #fff;">X</span>
<div style="left:1133.9px;top:399px;width:17px;height:17px;border-radius:50%;background:#b71b1b"></div>
<span style="left:1138.91px;top:402px;font-size:10.5px;color:#fff;font-weight:700;-webkit-text-stroke:0.2px #fff;">X</span>
<div style="left:1153.9px;top:399px;width:17px;height:17px;border-radius:50%;background:#b71b1b"></div>
<span style="left:1158.91px;top:402px;font-size:10.5px;color:#fff;font-weight:700;-webkit-text-stroke:0.2px #fff;">X</span>
<span style="left:1180.04px;top:402px;font-size:11px;color:#222;font-weight:700;letter-spacing:0.77px;-webkit-text-stroke:0.15px #222;">44%</span>
<div style="left:1207px;top:403px;width:37px;height:8px;background:#e2f0ec;"></div>
<div style="left:1207px;top:403px;width:16.68px;height:8px;background:#028568;"></div>
<span style="left:1247.88px;top:402px;font-size:11px;color:#222;font-weight:700;letter-spacing:1.5px;-webkit-text-stroke:0.15px #222;">3/5</span>
<svg style="left:1269px;top:399px" width="17" height="17" viewBox="-8.7 -8.2 17 17"><polygon points="0,-7.9 1.91,-2.63 7.51,-2.44 3.09,1 4.64,6.39 0,3.25 -4.64,6.39 -3.09,1 -7.51,-2.44 -1.91,-2.63" fill="#222"/></svg>
<svg style="left:1286px;top:399px" width="17" height="17" viewBox="-8.7 -8.2 17 17"><polygon points="0,-7.9 1.91,-2.63 7.51,-2.44 3.09,1 4.64,6.39 0,3.25 -4.64,6.39 -3.09,1 -7.51,-2.44 -1.91,-2.63" fill="#222"/></svg>
<svg style="left:1303px;top:399px" width="17" height="17" viewBox="-8.7 -8.2 17 17"><polygon points="0,-7.9 1.91,-2.63 7.51,-2.44 3.09,1 4.64,6.39 0,3.25 -4.64,6.39 -3.09,1 -7.51,-2.44 -1.91,-2.63" fill="#222"/></svg>
<svg style="left:1320px;top:399px" width="17" height="17" viewBox="-8.7 -8.2 17 17"><polygon points="0,-6.3 1.59,-2.18 5.99,-1.95 2.57,0.83 3.7,5.1 0,2.7 -3.7,5.1 -2.57,0.83 -5.99,-1.95 -1.59,-2.18" fill="#fff" stroke="#222" stroke-width="1.2" stroke-linejoin="miter"/></svg>
<svg style="left:1337px;top:399px" width="17" height="17" viewBox="-8.7 -8.2 17 17"><polygon points="0,-6.3 1.59,-2.18 5.99,-1.95 2.57,0.83 3.7,5.1 0,2.7 -3.7,5.1 -2.57,0.83 -5.99,-1.95 -1.59,-2.18" fill="#fff" stroke="#222" stroke-width="1.2" stroke-linejoin="miter"/></svg>
<div style="left:1357px;top:385px;width:63px;height:41px;border:1px solid #6fb6a4;border-radius:2.6px;background:#fff"></div>
<span style="left:1375.49px;top:401px;font-size:12.8px;color:#222;letter-spacing:0.93px;-webkit-text-stroke:0.25px #222;">5.29</span>
<div style="left:1424px;top:385px;width:62px;height:41px;border:1px solid #6fb6a4;border-radius:2.6px;background:#fff"></div>
<span style="left:1441.86px;top:401px;font-size:12.8px;color:#222;letter-spacing:0.95px;-webkit-text-stroke:0.25px #222;">2.43</span>
<div style="left:1490px;top:385px;width:63px;height:41px;border:1px solid #6fb6a4;border-radius:2.6px;background:#fff"></div>
<span style="left:1508.04px;top:401px;font-size:12.8px;color:#222;letter-spacing:1.04px;-webkit-text-stroke:0.25px #222;">1.50</span>
<div style="left:967px;top:429px;width:100px;height:1px;background:#ececec;"></div>
<div style="left:1356px;top:429px;width:200px;height:1px;background:#ececec;"></div>
<div style="left:972px;top:442px;width:21px;height:21px;background:#000;"></div>
<span style="left:976.54px;top:446px;font-size:16.6px;color:#fff;font-weight:700;transform:scaleX(1.317);-webkit-text-stroke:0.2px #fff;">6</span>
<span style="left:998.09px;top:447px;font-size:11px;color:#222;font-weight:700;letter-spacing:-0.04px;-webkit-text-stroke:0.15px #222;">Tereo</span>
<div style="left:1073.9px;top:445px;width:17px;height:17px;border-radius:50%;background:#b71b1b"></div>
<span style="left:1078.91px;top:448px;font-size:10.5px;color:#fff;font-weight:700;-webkit-text-stroke:0.2px #fff;">X</span>
<div style="left:1093.9px;top:445px;width:17px;height:17px;border-radius:50%;background:#b71b1b"></div>
<span style="left:1098.91px;top:448px;font-size:10.5px;color:#fff;font-weight:700;-webkit-text-stroke:0.2px #fff;">X</span>
<div style="left:1113.9px;top:445px;width:17px;height:17px;border-radius:50%;background:#b71b1b"></div>
<span style="left:1118.91px;top:448px;font-size:10.5px;color:#fff;font-weight:700;-webkit-text-stroke:0.2px #fff;">X</span>
<div style="left:1133.9px;top:445px;width:17px;height:17px;border-radius:50%;background:#b71b1b"></div>
<span style="left:1138.91px;top:448px;font-size:10.5px;color:#fff;font-weight:700;-webkit-text-stroke:0.2px #fff;">X</span>
<div style="left:1153.9px;top:445px;width:17px;height:17px;border-radius:50%;background:#b71b1b"></div>
<span style="left:1158.91px;top:448px;font-size:10.5px;color:#fff;font-weight:700;-webkit-text-stroke:0.2px #fff;">X</span>
<span style="left:1180.04px;top:448px;font-size:11px;color:#222;font-weight:700;letter-spacing:0.77px;-webkit-text-stroke:0.15px #222;">49%</span>
<div style="left:1207px;top:449px;width:37px;height:8px;background:#e2f0ec;"></div>
<div style="left:1207px;top:449px;width:18.53px;height:8px;background:#028568;"></div>
<span style="left:1247.88px;top:448px;font-size:11px;color:#222;font-weight:700;letter-spacing:1.5px;-webkit-text-stroke:0.15px #222;">3/5</span>
<svg style="left:1269px;top:445px" width="17" height="17" viewBox="-8.7 -8.2 17 17"><polygon points="0,-7.9 1.91,-2.63 7.51,-2.44 3.09,1 4.64,6.39 0,3.25 -4.64,6.39 -3.09,1 -7.51,-2.44 -1.91,-2.63" fill="#222"/></svg>
<svg style="left:1286px;top:445px" width="17" height="17" viewBox="-8.7 -8.2 17 17"><polygon points="0,-7.9 1.91,-2.63 7.51,-2.44 3.09,1 4.64,6.39 0,3.25 -4.64,6.39 -3.09,1 -7.51,-2.44 -1.91,-2.63" fill="#222"/></svg>
<svg style="left:1303px;top:445px" width="17" height="17" viewBox="-8.7 -8.2 17 17"><polygon points="0,-7.9 1.91,-2.63 7.51,-2.44 3.09,1 4.64,6.39 0,3.25 -4.64,6.39 -3.09,1 -7.51,-2.44 -1.91,-2.63" fill="#222"/></svg>
<svg style="left:1320px;top:445px" width="17" height="17" viewBox="-8.7 -8.2 17 17"><polygon points="0,-6.3 1.59,-2.18 5.99,-1.95 2.57,0.83 3.7,5.1 0,2.7 -3.7,5.1 -2.57,0.83 -5.99,-1.95 -1.59,-2.18" fill="#fff" stroke="#222" stroke-width="1.2" stroke-linejoin="miter"/></svg>
<svg style="left:1337px;top:445px" width="17" height="17" viewBox="-8.7 -8.2 17 17"><polygon points="0,-6.3 1.59,-2.18 5.99,-1.95 2.57,0.83 3.7,5.1 0,2.7 -3.7,5.1 -2.57,0.83 -5.99,-1.95 -1.59,-2.18" fill="#fff" stroke="#222" stroke-width="1.2" stroke-linejoin="miter"/></svg>
<div style="left:1357px;top:431px;width:63px;height:41px;border:1px solid #6fb6a4;border-radius:2.6px;background:#fff"></div>
<span style="left:1375.74px;top:447px;font-size:12.8px;color:#222;letter-spacing:0.82px;-webkit-text-stroke:0.25px #222;">4.68</span>
<div style="left:1424px;top:431px;width:62px;height:41px;border:1px solid #6fb6a4;border-radius:2.6px;background:#fff"></div>
<span style="left:1441.86px;top:447px;font-size:12.8px;color:#222;letter-spacing:0.95px;-webkit-text-stroke:0.25px #222;">2.18</span>
<div style="left:1490px;top:431px;width:63px;height:41px;border:1px solid #6fb6a4;border-radius:2.6px;background:#fff"></div>
<span style="left:1508.04px;top:447px;font-size:12.8px;color:#222;letter-spacing:1.08px;-webkit-text-stroke:0.25px #222;">1.39</span>
<div style="left:967px;top:475px;width:100px;height:1px;background:#ececec;"></div>
<div style="left:1356px;top:475px;width:200px;height:1px;background:#ececec;"></div>
<span style="left:1434.64px;top:481px;font-size:13px;color:#12836a;letter-spacing:0.42px;-webkit-text-stroke:0.2px #12836a;">Tutti i mercati</span>
<div style="left:1434.6px;top:492.8px;width:82.9px;height:1px;background:#12836a;"></div>
<svg style="left:1529px;top:481px" width="11" height="13" viewBox="1529 481 11 13"><path d="M1531.2 484.4 L1536.8 487.9 L1531.2 491.4" fill="none" stroke="#12836a" stroke-width="1.35"/></svg>
<div style="left:967px;top:507px;width:589px;height:40px;background:#333333;"></div>
<svg style="left:972px;top:515px" width="22" height="22" viewBox="2.1 3.5 22 22"><path d="M5 11.3 L10.9 7.3 L15.6 6.4 L19.8 7.7 L21.7 10.9 L22 22.9 L11 22.9 L12.4 17.1 L13.3 14.8 L6.3 14.8 L4.8 13.4 Z" fill="#e3e5ee"/><path d="M5.9 11.7 L11.2 8.1 L15.6 7.2 L19.3 8.4 L20.9 11.1 L21.2 22 L12.1 22 L13.2 17.3 L14.3 14.1 L6.6 14.1 L5.8 13.2 Z" fill="#d2d2d5" stroke="#1c2b6c" stroke-width="0.65" stroke-linejoin="round"/><path d="M16.4 8.3 L19.2 8.9 L19.4 11.6 L17.8 14.4 L16.8 13.2 Z" fill="#f4f4f6" stroke="#1c2b6c" stroke-width="0.65" stroke-linejoin="round"/><path d="M14.2 14.2 L13.9 16.6" stroke="#1c2b6c" stroke-width="0.9"/><path d="M6.4 12.8 L8.4 11.6 M9 11.2 L11.6 9.4" stroke="#1c2b6c" stroke-width="0.55"/></svg>
<span style="left:1008.55px;top:522px;font-size:11.2px;color:#fff;font-weight:700;letter-spacing:0.2px;-webkit-text-stroke:0.2px #fff;">CANI</span>
<span style="left:1052.87px;top:522px;font-size:11.2px;color:#fff;font-weight:700;letter-spacing:0.09px;-webkit-text-stroke:0.2px #fff;">PAL. 2509908735</span>
<span style="left:1161.13px;top:522px;font-size:11.2px;color:#fff;font-weight:700;transform:scaleX(0.981);-webkit-text-stroke:0.2px #fff;">AVV. 49</span>
<span style="left:1217.01px;top:522px;font-size:11.2px;color:#fff;font-weight:700;letter-spacing:0.32px;-webkit-text-stroke:0.2px #fff;">04:34</span>
<div style="left:1000px;top:518px;width:1px;height:18px;background:#fff;"></div>
<div style="left:1044px;top:518px;width:1px;height:18px;background:#fff;"></div>
<div style="left:1152px;top:518px;width:1px;height:18px;background:#fff;"></div>
<div style="left:1208px;top:518px;width:1px;height:18px;background:#fff;"></div>
<svg style="left:1538px;top:517px" width="13" height="17" viewBox="-6.3 -8.9 13 17"><path d="M-3.1 -5.3 L2.8 0 L-3.1 5.3" fill="none" stroke="#fff" stroke-width="2.5"/></svg>
<div style="left:967px;top:547px;width:146px;height:40px;background:#fff;"></div>
<div style="left:967px;top:582px;width:146px;height:5px;background:#028568;"></div>
<div style="left:1113px;top:547px;width:1px;height:40px;background:#f3efef;"></div>
<div style="left:1114px;top:547px;width:147px;height:40px;background:#e5e5e5;"></div>
<div style="left:1261px;top:547px;width:1px;height:40px;background:#f3efef;"></div>
<div style="left:1262px;top:547px;width:146px;height:40px;background:#e5e5e5;"></div>
<div style="left:1408px;top:547px;width:1px;height:40px;background:#f3efef;"></div>
<div style="left:1409px;top:547px;width:146px;height:40px;background:#e5e5e5;"></div>
<div style="left:1555px;top:547px;width:1px;height:40px;background:#e5e5e5;"></div>
<div style="left:967px;top:587px;width:589px;height:1px;background:#f3efef;"></div>
<div style="left:967px;top:588px;width:589px;height:40px;background:#f2f2f2;"></div>
<div style="left:967px;top:588px;width:146px;height:40px;background:#e5e5e5;"></div>
<div style="left:1113px;top:588px;width:1px;height:40px;background:#f3efef;"></div>
<div style="left:1114px;top:588px;width:147px;height:40px;background:#e5e5e5;"></div>
<div style="left:1261px;top:588px;width:1px;height:40px;background:#f3efef;"></div>
<span style="left:977.55px;top:561px;font-size:13px;color:#222;font-weight:700;letter-spacing:0.05px;-webkit-text-stroke:0.15px #222;">PRINCIPALE</span>
<span style="left:1125.54px;top:561px;font-size:13px;color:#333;letter-spacing:-0.11px;-webkit-text-stroke:0.12px #333;">TRIS IN ORDINE</span>
<span style="left:1273.3px;top:554px;font-size:13px;color:#333;transform:scaleX(0.983);-webkit-text-stroke:0.12px #333;">ACCOPPIATA IN</span>
<span style="left:1272.73px;top:567px;font-size:13px;color:#333;transform:scaleX(0.978);-webkit-text-stroke:0.12px #333;">ORDINE</span>
<span style="left:1420.8px;top:554px;font-size:13px;color:#333;transform:scaleX(0.974);-webkit-text-stroke:0.12px #333;">ACCOPPIATA NON IN</span>
<span style="left:1420.23px;top:567px;font-size:13px;color:#333;transform:scaleX(0.978);-webkit-text-stroke:0.12px #333;">ORDINE</span>
<span style="left:977.85px;top:595px;font-size:13px;color:#333;transform:scaleX(0.932);-webkit-text-stroke:0.12px #333;">SOMMA</span>
<span style="left:977.36px;top:608px;font-size:13px;color:#333;letter-spacing:0.16px;-webkit-text-stroke:0.12px #333;">PIAZZAMENTI</span>
<span style="left:1124.76px;top:602px;font-size:13px;color:#333;letter-spacing:0.38px;-webkit-text-stroke:0.12px #333;">DISPARI/PARI</span>
<div style="left:1067px;top:638px;width:1px;height:13px;background:#222;"></div>
<div style="left:1178px;top:638px;width:1px;height:13px;background:#222;"></div>
<div style="left:1246px;top:638px;width:1px;height:13px;background:#222;"></div>
<div style="left:1356px;top:638px;width:1px;height:13px;background:#222;"></div>
<div style="left:1423px;top:638px;width:1px;height:13px;background:#222;"></div>
<div style="left:1489px;top:638px;width:1px;height:13px;background:#222;"></div>
<span style="left:1086.88px;top:639px;font-size:11px;color:#484040;letter-spacing:0.37px;-webkit-text-stroke:0.12px #484040;">Ultimi risultati</span>
<span style="left:1182.42px;top:639px;font-size:11px;color:#484040;letter-spacing:0.02px;-webkit-text-stroke:0.12px #484040;">Prestazione</span>
<span style="left:1272.5px;top:639px;font-size:11px;color:#484040;letter-spacing:0.05px;-webkit-text-stroke:0.12px #484040;">Valutazione</span>
<span style="left:1362.8px;top:639px;font-size:11px;color:#333;transform:scaleX(0.968);-webkit-text-stroke:0.12px #333;">VINCENTE</span>
<span style="left:1429.32px;top:634px;font-size:11px;color:#333;letter-spacing:0.03px;-webkit-text-stroke:0.12px #333;">PIAZZATO</span>
<span style="left:1444.28px;top:645px;font-size:11px;color:#333;transform:scaleX(0.952);-webkit-text-stroke:0.12px #333;">SU 2</span>
<span style="left:1495.92px;top:634px;font-size:11px;color:#333;letter-spacing:0.03px;-webkit-text-stroke:0.12px #333;">PIAZZATO</span>
<span style="left:1510.88px;top:645px;font-size:11px;color:#333;transform:scaleX(0.950);-webkit-text-stroke:0.12px #333;">SU 3</span>
<div style="left:967px;top:661px;width:589px;height:1px;background:#303030;"></div>
<div style="left:972px;top:674px;width:21px;height:21px;background:#ed1c24;"></div>
<span style="left:978.58px;top:678px;font-size:16.6px;color:#fff;font-weight:700;transform:scaleX(0.820);-webkit-text-stroke:0.2px #fff;">1</span>
<span style="left:997.77px;top:679px;font-size:11px;color:#222;font-weight:700;transform:scaleX(0.968);-webkit-text-stroke:0.15px #222;">Caruso</span>
<div style="left:1073.9px;top:677px;width:17px;height:17px;border-radius:50%;background:#b71b1b"></div>
<span style="left:1078.91px;top:680px;font-size:10.5px;color:#fff;font-weight:700;-webkit-text-stroke:0.2px #fff;">X</span>
<div style="left:1093.9px;top:677px;width:17px;height:17px;border-radius:50%;background:#ffcc00"></div>
<span style="left:1099.15px;top:680px;font-size:11px;color:#3c4250;font-weight:700;-webkit-text-stroke:0.15px #3c4250;">1</span>
<div style="left:1113.9px;top:677px;width:17px;height:17px;border-radius:50%;background:#b71b1b"></div>
<span style="left:1118.91px;top:680px;font-size:10.5px;color:#fff;font-weight:700;-webkit-text-stroke:0.2px #fff;">X</span>
<div style="left:1133.9px;top:677px;width:17px;height:17px;border-radius:50%;background:#b71b1b"></div>
<span style="left:1138.91px;top:680px;font-size:10.5px;color:#fff;font-weight:700;-webkit-text-stroke:0.2px #fff;">X</span>
<div style="left:1153.9px;top:677px;width:17px;height:17px;border-radius:50%;background:#ffcc00"></div>
<span style="left:1159.15px;top:680px;font-size:11px;color:#3c4250;font-weight:700;-webkit-text-stroke:0.15px #3c4250;">1</span>
<span style="left:1180.04px;top:680px;font-size:11px;color:#222;font-weight:700;letter-spacing:0.77px;-webkit-text-stroke:0.15px #222;">48%</span>
<div style="left:1207px;top:681px;width:37px;height:8px;background:#e2f0ec;"></div>
<div style="left:1207px;top:681px;width:18.16px;height:8px;background:#028568;"></div>
<span style="left:1247.88px;top:680px;font-size:11px;color:#222;font-weight:700;letter-spacing:1.5px;-webkit-text-stroke:0.15px #222;">3/5</span>
<svg style="left:1269px;top:677px" width="17" height="17" viewBox="-8.7 -8.2 17 17"><polygon points="0,-7.9 1.91,-2.63 7.51,-2.44 3.09,1 4.64,6.39 0,3.25 -4.64,6.39 -3.09,1 -7.51,-2.44 -1.91,-2.63" fill="#222"/></svg>
<svg style="left:1286px;top:677px" width="17" height="17" viewBox="-8.7 -8.2 17 17"><polygon points="0,-7.9 1.91,-2.63 7.51,-2.44 3.09,1 4.64,6.39 0,3.25 -4.64,6.39 -3.09,1 -7.51,-2.44 -1.91,-2.63" fill="#222"/></svg>
<svg style="left:1303px;top:677px" width="17" height="17" viewBox="-8.7 -8.2 17 17"><polygon points="0,-7.9 1.91,-2.63 7.51,-2.44 3.09,1 4.64,6.39 0,3.25 -4.64,6.39 -3.09,1 -7.51,-2.44 -1.91,-2.63" fill="#222"/></svg>
<svg style="left:1320px;top:677px" width="17" height="17" viewBox="-8.7 -8.2 17 17"><polygon points="0,-6.3 1.59,-2.18 5.99,-1.95 2.57,0.83 3.7,5.1 0,2.7 -3.7,5.1 -2.57,0.83 -5.99,-1.95 -1.59,-2.18" fill="#fff" stroke="#222" stroke-width="1.2" stroke-linejoin="miter"/></svg>
<svg style="left:1337px;top:677px" width="17" height="17" viewBox="-8.7 -8.2 17 17"><polygon points="0,-6.3 1.59,-2.18 5.99,-1.95 2.57,0.83 3.7,5.1 0,2.7 -3.7,5.1 -2.57,0.83 -5.99,-1.95 -1.59,-2.18" fill="#fff" stroke="#222" stroke-width="1.2" stroke-linejoin="miter"/></svg>
<div style="left:1357px;top:663px;width:63px;height:41px;border:1px solid #6fb6a4;border-radius:2.6px;background:#fff"></div>
<span style="left:1375.74px;top:679px;font-size:12.8px;color:#222;letter-spacing:0.82px;-webkit-text-stroke:0.25px #222;">4.56</span>
<div style="left:1424px;top:663px;width:62px;height:41px;border:1px solid #6fb6a4;border-radius:2.6px;background:#fff"></div>
<span style="left:1441.86px;top:679px;font-size:12.8px;color:#222;letter-spacing:0.95px;-webkit-text-stroke:0.25px #222;">2.16</span>
<div style="left:1490px;top:663px;width:63px;height:41px;border:1px solid #6fb6a4;border-radius:2.6px;background:#fff"></div>
<span style="left:1508.04px;top:679px;font-size:12.8px;color:#222;letter-spacing:1.08px;-webkit-text-stroke:0.25px #222;">1.39</span>
<div style="left:967px;top:707px;width:100px;height:1px;background:#ececec;"></div>
<div style="left:1356px;top:707px;width:200px;height:1px;background:#ececec;"></div>
<div style="left:972px;top:720px;width:21px;height:21px;background:#0033b7;"></div>
<span style="left:977.16px;top:724px;font-size:16.6px;color:#fff;font-weight:700;transform:scaleX(1.193);-webkit-text-stroke:0.2px #fff;">2</span>
<span style="left:997.5px;top:725px;font-size:11px;color:#222;font-weight:700;transform:scaleX(0.979);-webkit-text-stroke:0.15px #222;">Evandro</span>
<div style="left:1073.9px;top:723px;width:17px;height:17px;border-radius:50%;background:#d2d6dc"></div>
<span style="left:1079.38px;top:726px;font-size:11px;color:#3c4452;font-weight:700;-webkit-text-stroke:0.15px #3c4452;">2</span>
<div style="left:1093.9px;top:723px;width:17px;height:17px;border-radius:50%;background:#b71b1b"></div>
<span style="left:1098.91px;top:726px;font-size:10.5px;color:#fff;font-weight:700;-webkit-text-stroke:0.2px #fff;">X</span>
<div style="left:1113.9px;top:723px;width:17px;height:17px;border-radius:50%;background:#ffcc00"></div>
<span style="left:1119.15px;top:726px;font-size:11px;color:#3c4250;font-weight:700;-webkit-text-stroke:0.15px #3c4250;">1</span>
<div style="left:1133.9px;top:723px;width:17px;height:17px;border-radius:50%;background:#a44c22"></div>
<span style="left:1139.43px;top:726px;font-size:11px;color:#fff;font-weight:700;-webkit-text-stroke:0.2px #fff;">3</span>
<div style="left:1153.9px;top:723px;width:17px;height:17px;border-radius:50%;background:#d2d6dc"></div>
<span style="left:1159.38px;top:726px;font-size:11px;color:#3c4452;font-weight:700;-webkit-text-stroke:0.15px #3c4452;">2</span>
<span style="left:1179.87px;top:726px;font-size:11px;color:#222;font-weight:700;letter-spacing:0.85px;-webkit-text-stroke:0.15px #222;">90%</span>
<div style="left:1207px;top:727px;width:37px;height:8px;background:#e2f0ec;"></div>
<div style="left:1207px;top:727px;width:33.7px;height:8px;background:#028568;"></div>
<span style="left:1247.77px;top:726px;font-size:11px;color:#222;font-weight:700;letter-spacing:1.56px;-webkit-text-stroke:0.15px #222;">5/5</span>
<svg style="left:1269px;top:723px" width="17" height="17" viewBox="-8.7 -8.2 17 17"><polygon points="0,-7.9 1.91,-2.63 7.51,-2.44 3.09,1 4.64,6.39 0,3.25 -4.64,6.39 -3.09,1 -7.51,-2.44 -1.91,-2.63" fill="#222"/></svg>
<svg style="left:1286px;top:723px" width="17" height="17" viewBox="-8.7 -8.2 17 17"><polygon points="0,-7.9 1.91,-2.63 7.51,-2.44 3.09,1 4.64,6.39 0,3.25 -4.64,6.39 -3.09,1 -7.51,-2.44 -1.91,-2.63" fill="#222"/></svg>
<svg style="left:1303px;top:723px" width="17" height="17" viewBox="-8.7 -8.2 17 17"><polygon points="0,-7.9 1.91,-2.63 7.51,-2.44 3.09,1 4.64,6.39 0,3.25 -4.64,6.39 -3.09,1 -7.51,-2.44 -1.91,-2.63" fill="#222"/></svg>
<svg style="left:1320px;top:723px" width="17" height="17" viewBox="-8.7 -8.2 17 17"><polygon points="0,-7.9 1.91,-2.63 7.51,-2.44 3.09,1 4.64,6.39 0,3.25 -4.64,6.39 -3.09,1 -7.51,-2.44 -1.91,-2.63" fill="#222"/></svg>
<svg style="left:1337px;top:723px" width="17" height="17" viewBox="-8.7 -8.2 17 17"><polygon points="0,-7.9 1.91,-2.63 7.51,-2.44 3.09,1 4.64,6.39 0,3.25 -4.64,6.39 -3.09,1 -7.51,-2.44 -1.91,-2.63" fill="#222"/></svg>
<div style="left:1357px;top:709px;width:63px;height:41px;border:1px solid #6fb6a4;border-radius:2.6px;background:#fff"></div>
<span style="left:1375.36px;top:725px;font-size:12.8px;color:#222;letter-spacing:0.95px;-webkit-text-stroke:0.25px #222;">2.45</span>
<div style="left:1424px;top:709px;width:62px;height:41px;border:1px solid #6fb6a4;border-radius:2.6px;background:#fff"></div>
<span style="left:1441.54px;top:725px;font-size:12.8px;color:#222;letter-spacing:1.06px;-webkit-text-stroke:0.25px #222;">1.38</span>
<div style="left:1490px;top:709px;width:63px;height:41px;border:1px solid #6fb6a4;border-radius:2.6px;background:#fff"></div>
<span style="left:1508.04px;top:725px;font-size:12.8px;color:#222;letter-spacing:1.06px;-webkit-text-stroke:0.25px #222;">1.06</span>
<div style="left:967px;top:753px;width:100px;height:1px;background:#ececec;"></div>
<div style="left:1356px;top:753px;width:200px;height:1px;background:#ececec;"></div>
<div style="left:972px;top:766px;width:21px;height:21px;background:#c9c9c9;"></div>
<span style="left:977.09px;top:770px;font-size:16.6px;color:#000;font-weight:700;transform:scaleX(1.229);-webkit-text-stroke:0.15px #000;">3</span>
<span style="left:997.77px;top:771px;font-size:11px;color:#222;font-weight:700;transform:scaleX(0.966);-webkit-text-stroke:0.15px #222;">Glove</span>
<div style="left:1073.9px;top:769px;width:17px;height:17px;border-radius:50%;background:#d2d6dc"></div>
<span style="left:1079.38px;top:772px;font-size:11px;color:#3c4452;font-weight:700;-webkit-text-stroke:0.15px #3c4452;">2</span>
<div style="left:1093.9px;top:769px;width:17px;height:17px;border-radius:50%;background:#d2d6dc"></div>
<span style="left:1099.38px;top:772px;font-size:11px;color:#3c4452;font-weight:700;-webkit-text-stroke:0.15px #3c4452;">2</span>
<div style="left:1113.9px;top:769px;width:17px;height:17px;border-radius:50%;background:#b71b1b"></div>
<span style="left:1118.91px;top:772px;font-size:10.5px;color:#fff;font-weight:700;-webkit-text-stroke:0.2px #fff;">X</span>
<div style="left:1133.9px;top:769px;width:17px;height:17px;border-radius:50%;background:#ffcc00"></div>
<span style="left:1139.15px;top:772px;font-size:11px;color:#3c4250;font-weight:700;-webkit-text-stroke:0.15px #3c4250;">1</span>
<div style="left:1153.9px;top:769px;width:17px;height:17px;border-radius:50%;background:#a44c22"></div>
<span style="left:1159.43px;top:772px;font-size:11px;color:#fff;font-weight:700;-webkit-text-stroke:0.2px #fff;">3</span>
<span style="left:1180.04px;top:772px;font-size:11px;color:#222;font-weight:700;letter-spacing:0.77px;-webkit-text-stroke:0.15px #222;">46%</span>
<div style="left:1207px;top:773px;width:37px;height:8px;background:#e2f0ec;"></div>
<div style="left:1207px;top:773px;width:17.42px;height:8px;background:#028568;"></div>
<span style="left:1247.88px;top:772px;font-size:11px;color:#222;font-weight:700;letter-spacing:1.5px;-webkit-text-stroke:0.15px #222;">3/5</span>
<svg style="left:1269px;top:769px" width="17" height="17" viewBox="-8.7 -8.2 17 17"><polygon points="0,-7.9 1.91,-2.63 7.51,-2.44 3.09,1 4.64,6.39 0,3.25 -4.64,6.39 -3.09,1 -7.51,-2.44 -1.91,-2.63" fill="#222"/></svg>
<svg style="left:1286px;top:769px" width="17" height="17" viewBox="-8.7 -8.2 17 17"><polygon points="0,-7.9 1.91,-2.63 7.51,-2.44 3.09,1 4.64,6.39 0,3.25 -4.64,6.39 -3.09,1 -7.51,-2.44 -1.91,-2.63" fill="#222"/></svg>
<svg style="left:1303px;top:769px" width="17" height="17" viewBox="-8.7 -8.2 17 17"><polygon points="0,-7.9 1.91,-2.63 7.51,-2.44 3.09,1 4.64,6.39 0,3.25 -4.64,6.39 -3.09,1 -7.51,-2.44 -1.91,-2.63" fill="#222"/></svg>
<svg style="left:1320px;top:769px" width="17" height="17" viewBox="-8.7 -8.2 17 17"><polygon points="0,-6.3 1.59,-2.18 5.99,-1.95 2.57,0.83 3.7,5.1 0,2.7 -3.7,5.1 -2.57,0.83 -5.99,-1.95 -1.59,-2.18" fill="#fff" stroke="#222" stroke-width="1.2" stroke-linejoin="miter"/></svg>
<svg style="left:1337px;top:769px" width="17" height="17" viewBox="-8.7 -8.2 17 17"><polygon points="0,-6.3 1.59,-2.18 5.99,-1.95 2.57,0.83 3.7,5.1 0,2.7 -3.7,5.1 -2.57,0.83 -5.99,-1.95 -1.59,-2.18" fill="#fff" stroke="#222" stroke-width="1.2" stroke-linejoin="miter"/></svg>
<div style="left:1357px;top:755px;width:63px;height:41px;border:1px solid #6fb6a4;border-radius:2.6px;background:#fff"></div>
<span style="left:1375.74px;top:771px;font-size:12.8px;color:#222;letter-spacing:0.82px;-webkit-text-stroke:0.25px #222;">4.93</span>
<div style="left:1424px;top:755px;width:62px;height:41px;border:1px solid #6fb6a4;border-radius:2.6px;background:#fff"></div>
<span style="left:1441.86px;top:771px;font-size:12.8px;color:#222;letter-spacing:0.97px;-webkit-text-stroke:0.25px #222;">2.31</span>
<div style="left:1490px;top:755px;width:63px;height:41px;border:1px solid #6fb6a4;border-radius:2.6px;background:#fff"></div>
<span style="left:1508.04px;top:771px;font-size:12.8px;color:#222;letter-spacing:1.06px;-webkit-text-stroke:0.25px #222;">1.46</span>
<div style="left:967px;top:799px;width:100px;height:1px;background:#ececec;"></div>
<div style="left:1356px;top:799px;width:200px;height:1px;background:#ececec;"></div>
<div style="left:972px;top:812px;width:21px;height:21px;background:#000;"></div>
<span style="left:976.53px;top:816px;font-size:16.6px;color:#fff;font-weight:700;transform:scaleX(1.283);-webkit-text-stroke:0.2px #fff;">4</span>
<span style="left:997.76px;top:817px;font-size:11px;color:#222;font-weight:700;letter-spacing:-0.06px;-webkit-text-stroke:0.15px #222;">Orazio</span>
<div style="left:1073.9px;top:815px;width:17px;height:17px;border-radius:50%;background:#b71b1b"></div>
<span style="left:1078.91px;top:818px;font-size:10.5px;color:#fff;font-weight:700;-webkit-text-stroke:0.2px #fff;">X</span>
<div style="left:1093.9px;top:815px;width:17px;height:17px;border-radius:50%;background:#b71b1b"></div>
<span style="left:1098.91px;top:818px;font-size:10.5px;color:#fff;font-weight:700;-webkit-text-stroke:0.2px #fff;">X</span>
<div style="left:1113.9px;top:815px;width:17px;height:17px;border-radius:50%;background:#b71b1b"></div>
<span style="left:1118.91px;top:818px;font-size:10.5px;color:#fff;font-weight:700;-webkit-text-stroke:0.2px #fff;">X</span>
<div style="left:1133.9px;top:815px;width:17px;height:17px;border-radius:50%;background:#b71b1b"></div>
<span style="left:1138.91px;top:818px;font-size:10.5px;color:#fff;font-weight:700;-webkit-text-stroke:0.2px #fff;">X</span>
<div style="left:1153.9px;top:815px;width:17px;height:17px;border-radius:50%;background:#b71b1b"></div>
<span style="left:1158.91px;top:818px;font-size:10.5px;color:#fff;font-weight:700;-webkit-text-stroke:0.2px #fff;">X</span>
<span style="left:1179.87px;top:818px;font-size:11px;color:#222;font-weight:700;letter-spacing:0.85px;-webkit-text-stroke:0.15px #222;">28%</span>
<div style="left:1207px;top:819px;width:37px;height:8px;background:#e2f0ec;"></div>
<div style="left:1207px;top:819px;width:10.76px;height:8px;background:#028568;"></div>
<span style="left:1247.77px;top:818px;font-size:11px;color:#222;font-weight:700;letter-spacing:1.56px;-webkit-text-stroke:0.15px #222;">2/5</span>
<svg style="left:1269px;top:815px" width="17" height="17" viewBox="-8.7 -8.2 17 17"><polygon points="0,-7.9 1.91,-2.63 7.51,-2.44 3.09,1 4.64,6.39 0,3.25 -4.64,6.39 -3.09,1 -7.51,-2.44 -1.91,-2.63" fill="#222"/></svg>
<svg style="left:1286px;top:815px" width="17" height="17" viewBox="-8.7 -8.2 17 17"><polygon points="0,-7.9 1.91,-2.63 7.51,-2.44 3.09,1 4.64,6.39 0,3.25 -4.64,6.39 -3.09,1 -7.51,-2.44 -1.91,-2.63" fill="#222"/></svg>
<svg style="left:1303px;top:815px" width="17" height="17" viewBox="-8.7 -8.2 17 17"><polygon points="0,-6.3 1.59,-2.18 5.99,-1.95 2.57,0.83 3.7,5.1 0,2.7 -3.7,5.1 -2.57,0.83 -5.99,-1.95 -1.59,-2.18" fill="#fff" stroke="#222" stroke-width="1.2" stroke-linejoin="miter"/></svg>
<svg style="left:1320px;top:815px" width="17" height="17" viewBox="-8.7 -8.2 17 17"><polygon points="0,-6.3 1.59,-2.18 5.99,-1.95 2.57,0.83 3.7,5.1 0,2.7 -3.7,5.1 -2.57,0.83 -5.99,-1.95 -1.59,-2.18" fill="#fff" stroke="#222" stroke-width="1.2" stroke-linejoin="miter"/></svg>
<svg style="left:1337px;top:815px" width="17" height="17" viewBox="-8.7 -8.2 17 17"><polygon points="0,-6.3 1.59,-2.18 5.99,-1.95 2.57,0.83 3.7,5.1 0,2.7 -3.7,5.1 -2.57,0.83 -5.99,-1.95 -1.59,-2.18" fill="#fff" stroke="#222" stroke-width="1.2" stroke-linejoin="miter"/></svg>
<div style="left:1357px;top:801px;width:63px;height:41px;border:1px solid #6fb6a4;border-radius:2.6px;background:#fff"></div>
<span style="left:1371.44px;top:817px;font-size:12.8px;color:#222;letter-spacing:0.8px;-webkit-text-stroke:0.25px #222;">18.10</span>
<div style="left:1424px;top:801px;width:62px;height:41px;border:1px solid #6fb6a4;border-radius:2.6px;background:#fff"></div>
<span style="left:1441.86px;top:817px;font-size:12.8px;color:#222;letter-spacing:0.97px;-webkit-text-stroke:0.25px #222;">7.91</span>
<div style="left:1490px;top:801px;width:63px;height:41px;border:1px solid #6fb6a4;border-radius:2.6px;background:#fff"></div>
<span style="left:1508.74px;top:817px;font-size:12.8px;color:#222;letter-spacing:0.82px;-webkit-text-stroke:0.25px #222;">4.43</span>
<div style="left:967px;top:845px;width:100px;height:1px;background:#ececec;"></div>
<div style="left:1356px;top:845px;width:200px;height:1px;background:#ececec;"></div>
<div style="left:1564px;top:45px;width:2px;height:40px;background:#333333;"></div>
<div style="left:1564px;top:163px;width:2px;height:4px;background:#028568;"></div>
<div style="left:1564px;top:167px;width:2px;height:172px;background:#f0f0f0;"></div>
<div style="left:1564px;top:339px;width:2px;height:25px;background:#028568;"></div>
<div style="left:1564px;top:364px;width:2px;height:225px;background:#3f63c9;"></div>
<div style="left:1564px;top:589px;width:2px;height:3px;background:#f0603a;"></div>
<div style="left:1564px;top:600px;width:2px;height:15px;background:#000;"></div>
<div style="left:1564px;top:617px;width:2px;height:209px;background:#2a1712;"></div>
</body></html>
